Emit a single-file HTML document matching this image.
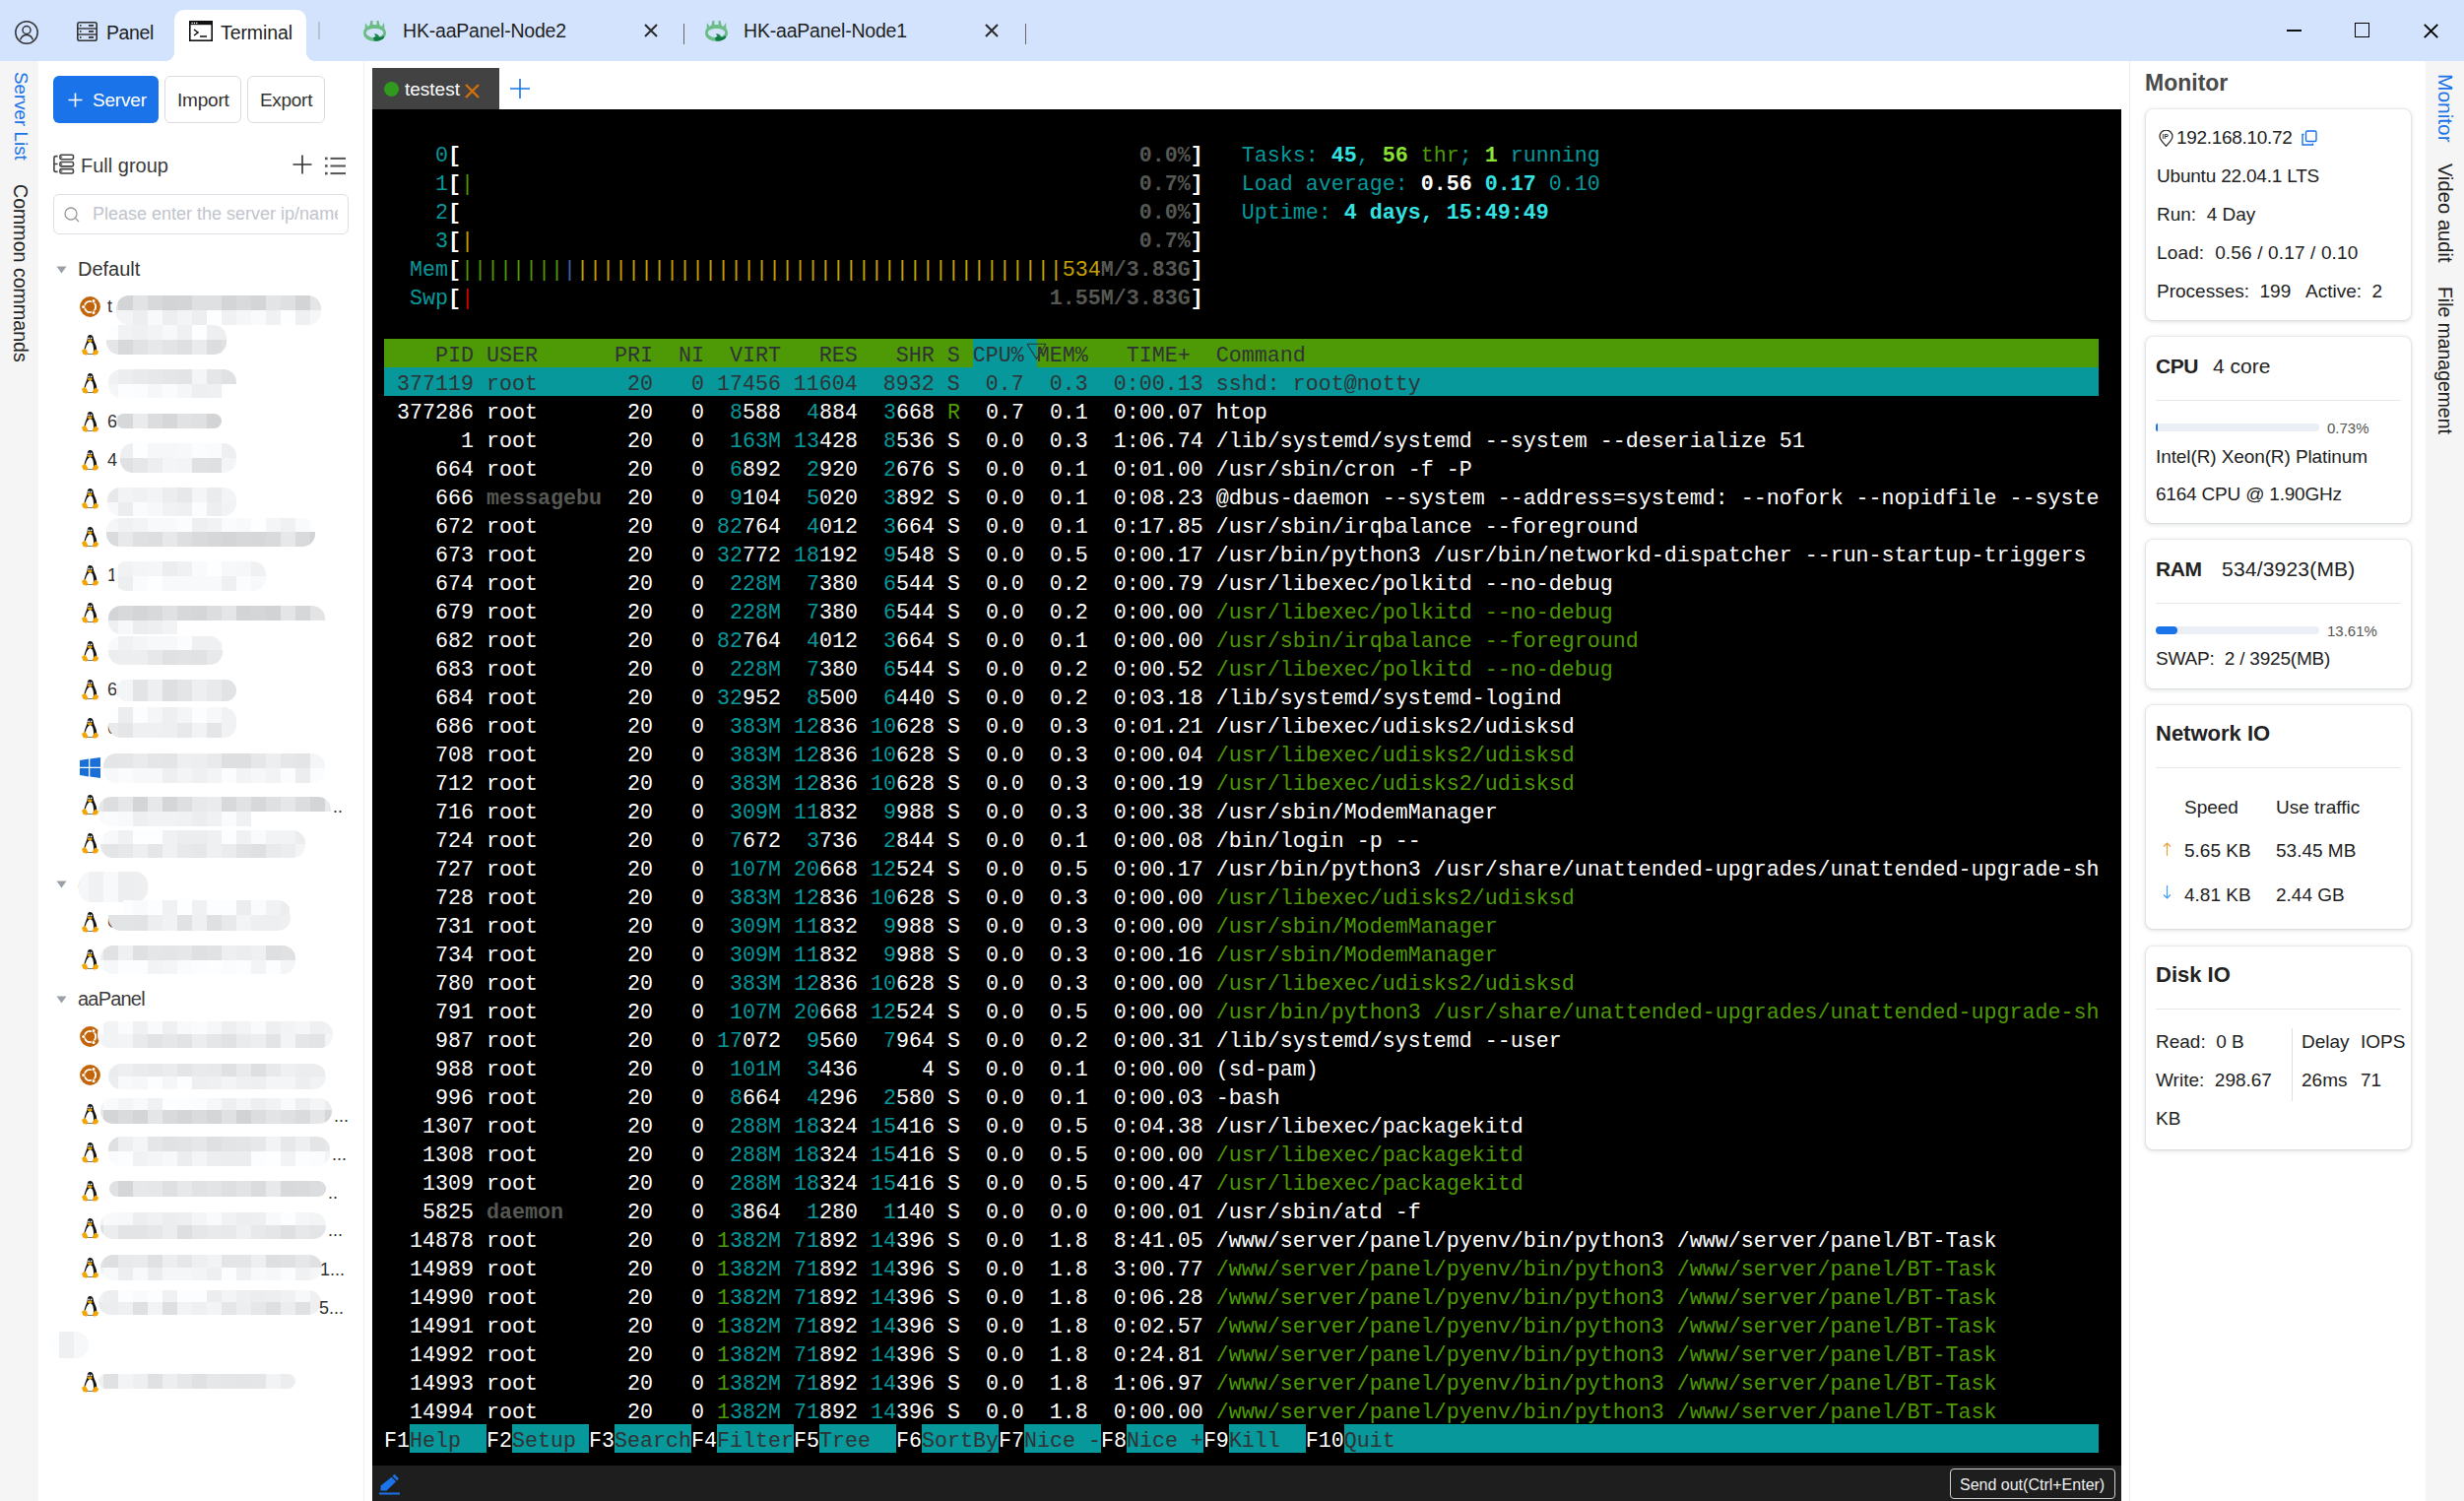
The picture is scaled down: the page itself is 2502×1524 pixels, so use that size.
<!DOCTYPE html>
<html><head><meta charset="utf-8">
<style>
*{box-sizing:border-box}
html,body{margin:0;padding:0;width:2502px;height:1524px;overflow:hidden;background:#fff;font-family:"Liberation Sans",sans-serif;color:#222}
.a{position:absolute}
.tl{position:absolute;left:390px;height:29px;line-height:29px;font-family:"Liberation Mono",monospace;font-size:21.67px;white-space:pre}
.vt{position:absolute;writing-mode:vertical-rl;font-size:20px;white-space:nowrap;line-height:20px}
.card{position:absolute;left:2179px;width:269px;background:#fff;border-radius:7px;box-shadow:0 1px 5px rgba(30,40,60,0.2),0 0 2px rgba(0,0,0,0.14)}
.mt{position:absolute;font-size:19px;white-space:nowrap;color:#222;line-height:22px}
</style></head><body>

<!-- top bar -->
<div class="a" style="left:0;top:0;width:2502px;height:62px;background:#d3e3fd"></div>
<!-- active tab -->
<div class="a" style="left:177px;top:10px;width:134px;height:52px;background:#fff;border-radius:10px 10px 0 0"></div>
<div class="a" style="left:167px;top:52px;width:10px;height:10px;background:radial-gradient(circle at 0 0,#d3e3fd 10px,#fff 10.5px)"></div>
<div class="a" style="left:311px;top:52px;width:10px;height:10px;background:radial-gradient(circle at 100% 0,#d3e3fd 10px,#fff 10.5px)"></div>

<!-- user icon -->
<svg class="a" style="left:15px;top:21px" width="24" height="24" viewBox="0 0 24 24"><circle cx="12" cy="12" r="11.2" fill="none" stroke="#333" stroke-width="1.5"/><circle cx="12" cy="9.5" r="4" fill="none" stroke="#333" stroke-width="1.5"/><path d="M5.5 19.5c1.2-3.2 3.6-5 6.5-5s5.3 1.8 6.5 5" fill="none" stroke="#333" stroke-width="1.5"/></svg>
<!-- panel icon -->
<svg class="a" style="left:78px;top:22px" width="21" height="20" viewBox="0 0 21 20"><rect x="0.8" y="0.8" width="19.4" height="18.4" rx="2" fill="none" stroke="#333" stroke-width="1.6"/><line x1="1" y1="7" x2="20" y2="7" stroke="#333" stroke-width="1.4"/><line x1="1" y1="13" x2="20" y2="13" stroke="#333" stroke-width="1.4"/><rect x="12" y="3" width="5" height="1.8" fill="#333"/><rect x="12" y="9" width="5" height="1.8" fill="#333"/><rect x="12" y="15" width="5" height="1.8" fill="#333"/><rect x="3" y="3" width="1.5" height="1.8" fill="#333"/><rect x="3" y="9" width="1.5" height="1.8" fill="#333"/><rect x="3" y="15" width="1.5" height="1.8" fill="#333"/></svg>
<div class="a" style="left:108px;top:21px;font-size:19.5px;line-height:24px;color:#1f1f1f;letter-spacing:-0.4px">Panel</div>
<!-- terminal icon -->
<svg class="a" style="left:192px;top:21px" width="24" height="21" viewBox="0 0 24 21"><rect x="0.8" y="0.8" width="22.4" height="19.4" fill="none" stroke="#111" stroke-width="1.6"/><rect x="0.8" y="0.8" width="22.4" height="3.4" fill="#111"/><rect x="2.5" y="1.8" width="1.3" height="1.3" fill="#fff"/><rect x="4.8" y="1.8" width="1.3" height="1.3" fill="#fff"/><rect x="7.1" y="1.8" width="1.3" height="1.3" fill="#fff"/><path d="M5 9l4 3-4 3" fill="none" stroke="#111" stroke-width="1.5"/><line x1="11" y1="16" x2="18" y2="16" stroke="#111" stroke-width="1.5"/></svg>
<div class="a" style="left:224px;top:21px;font-size:19.5px;line-height:24px;color:#1f1f1f;letter-spacing:-0.1px">Terminal</div>
<div class="a" style="left:323px;top:22px;width:2px;height:18px;background:#b9c3d2"></div>

<!-- node tabs -->
<svg class="a" style="left:368px;top:20px" width="25" height="23" viewBox="0 0 25 23"><path fill-rule="evenodd" d="M12.5 5C19 5 24 8.6 24 13.5S19 22 12.5 22S1 18.4 1 13.5S6 5 12.5 5ZM12.5 9C7.5 9 3.8 10.8 3.8 13.2S7.5 18 12.5 18S21.2 15.6 21.2 13.2S17.5 9 12.5 9Z" fill="#6cbd85"/><path d="M2.5 9L3 3L5.5 7ZM7 7L8.5 1H10.5L10.5 6.5ZM14.5 6.5L14.5 1H16.5L18 7ZM19.5 7L22 3L22.5 9Z" fill="#6cbd85"/><path d="M11 18.5C13 16.5 15 16 17.5 17.5C19.5 18 20.5 17 21.5 16L22 18.5C20 21 16 22 12 21.5Z" fill="#0e7a45"/><path d="M12 14.5C14 14 16 15 17 17L14 18Z" fill="#1b8a4c"/></svg>
<div class="a" style="left:409px;top:19px;font-size:19.5px;line-height:24px;color:#1f1f1f;letter-spacing:-0.2px">HK-aaPanel-Node2</div>
<svg class="a" style="left:654px;top:24px" width="14" height="14" viewBox="0 0 14 14"><path d="M1 1L13 13M13 1L1 13" stroke="#2a2a2a" stroke-width="2"/></svg>
<div class="a" style="left:694px;top:24px;width:1px;height:21px;background:#666"></div>
<svg class="a" style="left:715px;top:20px" width="25" height="23" viewBox="0 0 25 23"><path fill-rule="evenodd" d="M12.5 5C19 5 24 8.6 24 13.5S19 22 12.5 22S1 18.4 1 13.5S6 5 12.5 5ZM12.5 9C7.5 9 3.8 10.8 3.8 13.2S7.5 18 12.5 18S21.2 15.6 21.2 13.2S17.5 9 12.5 9Z" fill="#6cbd85"/><path d="M2.5 9L3 3L5.5 7ZM7 7L8.5 1H10.5L10.5 6.5ZM14.5 6.5L14.5 1H16.5L18 7ZM19.5 7L22 3L22.5 9Z" fill="#6cbd85"/><path d="M11 18.5C13 16.5 15 16 17.5 17.5C19.5 18 20.5 17 21.5 16L22 18.5C20 21 16 22 12 21.5Z" fill="#0e7a45"/><path d="M12 14.5C14 14 16 15 17 17L14 18Z" fill="#1b8a4c"/></svg>
<div class="a" style="left:755px;top:19px;font-size:19.5px;line-height:24px;color:#1f1f1f;letter-spacing:-0.2px">HK-aaPanel-Node1</div>
<svg class="a" style="left:1000px;top:24px" width="14" height="14" viewBox="0 0 14 14"><path d="M1 1L13 13M13 1L1 13" stroke="#2a2a2a" stroke-width="2"/></svg>
<div class="a" style="left:1041px;top:24px;width:1px;height:21px;background:#666"></div>

<!-- window controls -->
<div class="a" style="left:2322px;top:30px;width:15px;height:2px;background:#111"></div>
<div class="a" style="left:2391px;top:23px;width:15px;height:15px;border:1.6px solid #000"></div>
<svg class="a" style="left:2461px;top:24px" width="15" height="15" viewBox="0 0 15 15"><path d="M0.8 0.8L14.2 14.2M14.2 0.8L0.8 14.2" stroke="#000" stroke-width="1.9"/></svg>

<!-- left sidebar -->
<div class="a" style="left:0;top:62px;width:39px;height:1462px;background:#f5f5f5"></div>
<div class="vt" style="left:11px;top:73px;color:#1a73e8;font-size:18.8px">Server List</div>
<div class="vt" style="left:11px;top:187px;color:#222;font-size:19.6px">Common commands</div>

<!-- server panel -->
<div class="a" style="left:369px;top:62px;width:1px;height:1462px;background:#eeeeee"></div>
<div class="a" style="left:54px;top:77px;width:107px;height:48px;background:#1a73e8;border-radius:6px"></div>
<svg class="a" style="left:69px;top:94px" width="15" height="15" viewBox="0 0 15 15"><path d="M7.5 0.5V14.5M0.5 7.5H14.5" stroke="#fff" stroke-width="1.6"/></svg>
<div class="a" style="left:94px;top:90px;font-size:19px;line-height:24px;color:#fff;letter-spacing:-0.2px">Server</div>
<div class="a" style="left:167px;top:77px;width:78px;height:48px;border:1px solid #dcdcdc;border-radius:6px"></div>
<div class="a" style="left:180px;top:90px;font-size:19px;line-height:24px;color:#333;letter-spacing:-0.2px">Import</div>
<div class="a" style="left:251px;top:77px;width:79px;height:48px;border:1px solid #dcdcdc;border-radius:6px"></div>
<div class="a" style="left:264px;top:90px;font-size:19px;line-height:24px;color:#333;letter-spacing:-0.3px">Export</div>

<svg class="a" style="left:54px;top:156px" width="22" height="21" viewBox="0 0 22 21"><path d="M4.6 2.6H2.6Q0.9 2.6 0.9 4.3V16.6Q0.9 18.4 2.6 18.4H4.6M0.9 10.5H4.6" fill="none" stroke="#444" stroke-width="1.6"/><rect x="6.9" y="1.3" width="13.6" height="4.4" rx="1.4" fill="none" stroke="#444" stroke-width="1.6"/><rect x="6.9" y="8.5" width="13.6" height="4.4" rx="1.4" fill="none" stroke="#444" stroke-width="1.6"/><rect x="6.9" y="15.6" width="13.6" height="4.4" rx="1.4" fill="none" stroke="#444" stroke-width="1.6"/><rect x="8.2" y="2.6" width="1" height="1.8" fill="#444"/><rect x="8.2" y="9.8" width="1" height="1.8" fill="#444"/><rect x="8.2" y="16.9" width="1" height="1.8" fill="#444"/></svg>
<div class="a" style="left:82px;top:156px;font-size:20px;line-height:24px;color:#3a3a3a">Full group</div>
<svg class="a" style="left:297px;top:157px" width="20" height="20" viewBox="0 0 20 20"><path d="M10 0.5V19.5M0.5 10H19.5" stroke="#333" stroke-width="1.6"/></svg>
<svg class="a" style="left:330px;top:159px" width="21" height="19" viewBox="0 0 21 19"><rect x="0" y="0.6" width="2.6" height="2.6" fill="#555"/><rect x="0" y="8.2" width="2.6" height="2.6" fill="#555"/><rect x="0" y="15.8" width="2.6" height="2.6" fill="#555"/><rect x="5.5" y="0.9" width="15.5" height="2" fill="#555"/><rect x="5.5" y="8.5" width="15.5" height="2" fill="#555"/><rect x="5.5" y="16.1" width="15.5" height="2" fill="#555"/></svg>

<div class="a" style="left:54px;top:197px;width:300px;height:41px;border:1px solid #dcdfe6;border-radius:6px"></div>
<svg class="a" style="left:65px;top:210px" width="16" height="16" viewBox="0 0 16 16"><circle cx="7" cy="7" r="6" fill="none" stroke="#999" stroke-width="1.3"/><path d="M11.5 11.5L15 15" stroke="#999" stroke-width="1.3"/></svg>
<div class="a" style="left:94px;top:206px;font-size:18px;line-height:22px;color:#c0c4cc;white-space:nowrap;overflow:hidden;width:249px">Please enter the server ip/name</div>

<svg class="a" style="left:57px;top:270px" width="11" height="8" viewBox="0 0 11 8"><path d="M0.5 0.5H10.5L5.5 7.5Z" fill="#9aa0a8"/></svg>
<div class="a" style="left:79px;top:261px;font-size:20px;line-height:24px;color:#333">Default</div>
<svg class="a" style="left:57px;top:894px" width="11" height="8" viewBox="0 0 11 8"><path d="M0.5 0.5H10.5L5.5 7.5Z" fill="#9aa0a8"/></svg>
<div class="a" style="left:79px;top:889px;font-size:20px;line-height:22px;color:#444;white-space:nowrap">C</div>
<div class="a" style="left:80px;top:885px;width:70px;height:31px;border-radius:13px;overflow:hidden"><div class="a" style="left:0px;top:0px;width:10px;height:31px;background:#f6f7f9"></div><div class="a" style="left:10px;top:0px;width:15px;height:31px;background:#f0f1f3"></div><div class="a" style="left:25px;top:0px;width:15px;height:31px;background:#f8f9fb"></div><div class="a" style="left:40px;top:0px;width:15px;height:31px;background:#edeef0"></div><div class="a" style="left:55px;top:0px;width:15px;height:31px;background:#eeeff1"></div></div>
<svg class="a" style="left:57px;top:1011px" width="11" height="8" viewBox="0 0 11 8"><path d="M0.5 0.5H10.5L5.5 7.5Z" fill="#9aa0a8"/></svg>
<div class="a" style="left:79px;top:1002px;font-size:20px;line-height:24px;color:#3c3c3c;letter-spacing:-0.8px">aaPanel</div>
<div class="a" style="left:51px;top:1352px;width:39px;height:27px;border-radius:13px;overflow:hidden"><div class="a" style="left:0px;top:0px;width:9px;height:27px;background:#fdfeff"></div><div class="a" style="left:9px;top:0px;width:15px;height:27px;background:#eff0f2"></div><div class="a" style="left:24px;top:0px;width:15px;height:27px;background:#f7f8fa"></div></div>
<svg class="a" style="left:81px;top:301px" width="21" height="21" viewBox="0 0 21 21"><circle cx="10.5" cy="10.5" r="10.4" fill="#c2650a"/><circle cx="10.5" cy="10.5" r="5.7" fill="none" stroke="#fff" stroke-width="1.8"/><circle cx="10.5" cy="10.5" r="3.4" fill="#c2650a"/><circle cx="3.6" cy="10.5" r="2.3" fill="#c2650a"/><circle cx="14" cy="4.4" r="2.3" fill="#c2650a"/><circle cx="14" cy="16.6" r="2.3" fill="#c2650a"/><circle cx="3.6" cy="10.5" r="1.5" fill="#fff"/><circle cx="14" cy="4.4" r="1.5" fill="#fff"/><circle cx="14" cy="16.6" r="1.5" fill="#fff"/></svg>
<div class="a" style="left:109px;top:300px;font-size:18px;line-height:22px;color:#333;white-space:nowrap">t</div>
<div class="a" style="left:118px;top:300px;width:208px;height:30px;border-radius:13px;overflow:hidden"><div class="a" style="left:0px;top:0px;width:2px;height:15px;background:#e4e5e7"></div><div class="a" style="left:2px;top:0px;width:15px;height:15px;background:#d3d4d6"></div><div class="a" style="left:17px;top:0px;width:15px;height:15px;background:#e2e3e5"></div><div class="a" style="left:32px;top:0px;width:15px;height:15px;background:#d8d9db"></div><div class="a" style="left:47px;top:0px;width:15px;height:15px;background:#d3d4d6"></div><div class="a" style="left:62px;top:0px;width:15px;height:15px;background:#d4d5d7"></div><div class="a" style="left:77px;top:0px;width:15px;height:15px;background:#dfe0e2"></div><div class="a" style="left:92px;top:0px;width:15px;height:15px;background:#dfe0e2"></div><div class="a" style="left:107px;top:0px;width:15px;height:15px;background:#d4d5d7"></div><div class="a" style="left:122px;top:0px;width:15px;height:15px;background:#d9dadc"></div><div class="a" style="left:137px;top:0px;width:15px;height:15px;background:#d4d5d7"></div><div class="a" style="left:152px;top:0px;width:15px;height:15px;background:#e3e4e6"></div><div class="a" style="left:167px;top:0px;width:15px;height:15px;background:#dfe0e2"></div><div class="a" style="left:182px;top:0px;width:15px;height:15px;background:#d3d4d6"></div><div class="a" style="left:197px;top:0px;width:11px;height:15px;background:#e4e5e7"></div><div class="a" style="left:0px;top:15px;width:2px;height:15px;background:#eff0f2"></div><div class="a" style="left:2px;top:15px;width:15px;height:15px;background:#f3f4f6"></div><div class="a" style="left:17px;top:15px;width:15px;height:15px;background:#edeef0"></div><div class="a" style="left:32px;top:15px;width:15px;height:15px;background:#f8f9fb"></div><div class="a" style="left:47px;top:15px;width:15px;height:15px;background:#edeef0"></div><div class="a" style="left:62px;top:15px;width:15px;height:15px;background:#f3f4f6"></div><div class="a" style="left:77px;top:15px;width:15px;height:15px;background:#edeef0"></div><div class="a" style="left:92px;top:15px;width:15px;height:15px;background:#fdfeff"></div><div class="a" style="left:107px;top:15px;width:15px;height:15px;background:#f0f1f3"></div><div class="a" style="left:122px;top:15px;width:15px;height:15px;background:#f5f6f8"></div><div class="a" style="left:137px;top:15px;width:15px;height:15px;background:#f9fafc"></div><div class="a" style="left:152px;top:15px;width:15px;height:15px;background:#f0f1f3"></div><div class="a" style="left:167px;top:15px;width:15px;height:15px;background:#fdfeff"></div><div class="a" style="left:182px;top:15px;width:15px;height:15px;background:#eff0f2"></div><div class="a" style="left:197px;top:15px;width:11px;height:15px;background:#f5f6f8"></div></div>
<svg class="a" style="left:83px;top:340px" width="18" height="21" viewBox="0 0 18 21"><path d="M8.3 0C6.6 0 5.8 1.5 5.8 3.3C5.8 5.5 4.6 7.8 3.6 10.5C2.8 12.8 2.2 15 2.4 17.5L2.6 19.8H14.6C15.2 17 15.5 14.5 14.8 12C14 9 11.8 5.8 11.8 3.6C11.8 1.5 10.4 0 8.3 0Z" fill="#151515"/><path d="M7.8 7.4C5.8 8.4 3.8 12 3.6 16.5L3.8 19.2H11.6C12.4 15 12 10.2 10.2 8C9.5 7.2 8.6 7.1 7.8 7.4Z" fill="#fff"/><circle cx="7.2" cy="3.4" r="0.9" fill="#fff"/><circle cx="9.6" cy="3.4" r="0.9" fill="#fff"/><ellipse cx="8.3" cy="6" rx="2.4" ry="1.4" fill="#f4a500"/><path d="M0 15.8L3.8 13.8L6.4 18.8L4.6 20.7L1.2 19.6Z" fill="#f4a500"/><path d="M17.2 16.8L13.4 14.6L10.8 19L12.6 20.8L16 19.8Z" fill="#f4a500"/></svg>
<div class="a" style="left:108px;top:330px;width:122px;height:30px;border-radius:13px;overflow:hidden"><div class="a" style="left:0px;top:0px;width:12px;height:15px;background:#fdfeff"></div><div class="a" style="left:12px;top:0px;width:15px;height:15px;background:#f1f2f4"></div><div class="a" style="left:27px;top:0px;width:15px;height:15px;background:#eff0f2"></div><div class="a" style="left:42px;top:0px;width:15px;height:15px;background:#f2f3f5"></div><div class="a" style="left:57px;top:0px;width:15px;height:15px;background:#f7f8fa"></div><div class="a" style="left:72px;top:0px;width:15px;height:15px;background:#eff0f2"></div><div class="a" style="left:87px;top:0px;width:15px;height:15px;background:#fdfeff"></div><div class="a" style="left:102px;top:0px;width:15px;height:15px;background:#eeeff1"></div><div class="a" style="left:117px;top:0px;width:5px;height:15px;background:#edeef0"></div><div class="a" style="left:0px;top:15px;width:12px;height:15px;background:#e5e6e8"></div><div class="a" style="left:12px;top:15px;width:15px;height:15px;background:#d8d9db"></div><div class="a" style="left:27px;top:15px;width:15px;height:15px;background:#e1e2e4"></div><div class="a" style="left:42px;top:15px;width:15px;height:15px;background:#e7e8ea"></div><div class="a" style="left:57px;top:15px;width:15px;height:15px;background:#e3e4e6"></div><div class="a" style="left:72px;top:15px;width:15px;height:15px;background:#dfe0e2"></div><div class="a" style="left:87px;top:15px;width:15px;height:15px;background:#eaebed"></div><div class="a" style="left:102px;top:15px;width:15px;height:15px;background:#dcdddf"></div><div class="a" style="left:117px;top:15px;width:5px;height:15px;background:#e0e1e3"></div></div>
<svg class="a" style="left:83px;top:379px" width="18" height="21" viewBox="0 0 18 21"><path d="M8.3 0C6.6 0 5.8 1.5 5.8 3.3C5.8 5.5 4.6 7.8 3.6 10.5C2.8 12.8 2.2 15 2.4 17.5L2.6 19.8H14.6C15.2 17 15.5 14.5 14.8 12C14 9 11.8 5.8 11.8 3.6C11.8 1.5 10.4 0 8.3 0Z" fill="#151515"/><path d="M7.8 7.4C5.8 8.4 3.8 12 3.6 16.5L3.8 19.2H11.6C12.4 15 12 10.2 10.2 8C9.5 7.2 8.6 7.1 7.8 7.4Z" fill="#fff"/><circle cx="7.2" cy="3.4" r="0.9" fill="#fff"/><circle cx="9.6" cy="3.4" r="0.9" fill="#fff"/><ellipse cx="8.3" cy="6" rx="2.4" ry="1.4" fill="#f4a500"/><path d="M0 15.8L3.8 13.8L6.4 18.8L4.6 20.7L1.2 19.6Z" fill="#f4a500"/><path d="M17.2 16.8L13.4 14.6L10.8 19L12.6 20.8L16 19.8Z" fill="#f4a500"/></svg>
<div class="a" style="left:110px;top:375px;width:130px;height:29px;border-radius:13px;overflow:hidden"><div class="a" style="left:0px;top:0px;width:10px;height:15px;background:#f0f1f3"></div><div class="a" style="left:10px;top:0px;width:15px;height:15px;background:#ecedef"></div><div class="a" style="left:25px;top:0px;width:15px;height:15px;background:#e9eaec"></div><div class="a" style="left:40px;top:0px;width:15px;height:15px;background:#e7e8ea"></div><div class="a" style="left:55px;top:0px;width:15px;height:15px;background:#e5e6e8"></div><div class="a" style="left:70px;top:0px;width:15px;height:15px;background:#e3e4e6"></div><div class="a" style="left:85px;top:0px;width:15px;height:15px;background:#f4f5f7"></div><div class="a" style="left:100px;top:0px;width:15px;height:15px;background:#e5e6e8"></div><div class="a" style="left:115px;top:0px;width:15px;height:15px;background:#e0e1e3"></div><div class="a" style="left:0px;top:15px;width:10px;height:14px;background:#f5f6f8"></div><div class="a" style="left:10px;top:15px;width:15px;height:14px;background:#fcfdff"></div><div class="a" style="left:25px;top:15px;width:15px;height:14px;background:#fbfcfe"></div><div class="a" style="left:40px;top:15px;width:15px;height:14px;background:#f6f7f9"></div><div class="a" style="left:55px;top:15px;width:15px;height:14px;background:#fafbfd"></div><div class="a" style="left:70px;top:15px;width:15px;height:14px;background:#f5f6f8"></div><div class="a" style="left:85px;top:15px;width:15px;height:14px;background:#eeeff1"></div><div class="a" style="left:100px;top:15px;width:15px;height:14px;background:#eff0f2"></div><div class="a" style="left:115px;top:15px;width:3px;height:14px;background:#fcfdff"></div></div>
<svg class="a" style="left:83px;top:418px" width="18" height="21" viewBox="0 0 18 21"><path d="M8.3 0C6.6 0 5.8 1.5 5.8 3.3C5.8 5.5 4.6 7.8 3.6 10.5C2.8 12.8 2.2 15 2.4 17.5L2.6 19.8H14.6C15.2 17 15.5 14.5 14.8 12C14 9 11.8 5.8 11.8 3.6C11.8 1.5 10.4 0 8.3 0Z" fill="#151515"/><path d="M7.8 7.4C5.8 8.4 3.8 12 3.6 16.5L3.8 19.2H11.6C12.4 15 12 10.2 10.2 8C9.5 7.2 8.6 7.1 7.8 7.4Z" fill="#fff"/><circle cx="7.2" cy="3.4" r="0.9" fill="#fff"/><circle cx="9.6" cy="3.4" r="0.9" fill="#fff"/><ellipse cx="8.3" cy="6" rx="2.4" ry="1.4" fill="#f4a500"/><path d="M0 15.8L3.8 13.8L6.4 18.8L4.6 20.7L1.2 19.6Z" fill="#f4a500"/><path d="M17.2 16.8L13.4 14.6L10.8 19L12.6 20.8L16 19.8Z" fill="#f4a500"/></svg>
<div class="a" style="left:109px;top:417px;font-size:18px;line-height:22px;color:#333;white-space:nowrap">6</div>
<div class="a" style="left:118px;top:420px;width:107px;height:15px;border-radius:13px;overflow:hidden"><div class="a" style="left:0px;top:0px;width:2px;height:15px;background:#dfe0e2"></div><div class="a" style="left:2px;top:0px;width:15px;height:15px;background:#d7d8da"></div><div class="a" style="left:17px;top:0px;width:15px;height:15px;background:#eaebed"></div><div class="a" style="left:32px;top:0px;width:15px;height:15px;background:#dcdddf"></div><div class="a" style="left:47px;top:0px;width:15px;height:15px;background:#d6d7d9"></div><div class="a" style="left:62px;top:0px;width:15px;height:15px;background:#e1e2e4"></div><div class="a" style="left:77px;top:0px;width:15px;height:15px;background:#dfe0e2"></div><div class="a" style="left:92px;top:0px;width:15px;height:15px;background:#d3d4d6"></div></div>
<svg class="a" style="left:83px;top:457px" width="18" height="21" viewBox="0 0 18 21"><path d="M8.3 0C6.6 0 5.8 1.5 5.8 3.3C5.8 5.5 4.6 7.8 3.6 10.5C2.8 12.8 2.2 15 2.4 17.5L2.6 19.8H14.6C15.2 17 15.5 14.5 14.8 12C14 9 11.8 5.8 11.8 3.6C11.8 1.5 10.4 0 8.3 0Z" fill="#151515"/><path d="M7.8 7.4C5.8 8.4 3.8 12 3.6 16.5L3.8 19.2H11.6C12.4 15 12 10.2 10.2 8C9.5 7.2 8.6 7.1 7.8 7.4Z" fill="#fff"/><circle cx="7.2" cy="3.4" r="0.9" fill="#fff"/><circle cx="9.6" cy="3.4" r="0.9" fill="#fff"/><ellipse cx="8.3" cy="6" rx="2.4" ry="1.4" fill="#f4a500"/><path d="M0 15.8L3.8 13.8L6.4 18.8L4.6 20.7L1.2 19.6Z" fill="#f4a500"/><path d="M17.2 16.8L13.4 14.6L10.8 19L12.6 20.8L16 19.8Z" fill="#f4a500"/></svg>
<div class="a" style="left:109px;top:456px;font-size:18px;line-height:22px;color:#333;white-space:nowrap">4</div>
<div class="a" style="left:122px;top:450px;width:118px;height:30px;border-radius:13px;overflow:hidden"><div class="a" style="left:0px;top:0px;width:13px;height:15px;background:#eeeff1"></div><div class="a" style="left:13px;top:0px;width:15px;height:15px;background:#fdfeff"></div><div class="a" style="left:28px;top:0px;width:15px;height:15px;background:#f6f7f9"></div><div class="a" style="left:43px;top:0px;width:15px;height:15px;background:#f6f7f9"></div><div class="a" style="left:58px;top:0px;width:15px;height:15px;background:#f7f8fa"></div><div class="a" style="left:73px;top:0px;width:15px;height:15px;background:#fbfcfe"></div><div class="a" style="left:88px;top:0px;width:15px;height:15px;background:#fafbfd"></div><div class="a" style="left:103px;top:0px;width:15px;height:15px;background:#eeeff1"></div><div class="a" style="left:0px;top:15px;width:13px;height:15px;background:#e0e1e3"></div><div class="a" style="left:13px;top:15px;width:15px;height:15px;background:#e6e7e9"></div><div class="a" style="left:28px;top:15px;width:15px;height:15px;background:#edeef0"></div><div class="a" style="left:43px;top:15px;width:15px;height:15px;background:#f4f5f7"></div><div class="a" style="left:58px;top:15px;width:15px;height:15px;background:#f3f4f6"></div><div class="a" style="left:73px;top:15px;width:15px;height:15px;background:#e0e1e3"></div><div class="a" style="left:88px;top:15px;width:15px;height:15px;background:#dfe0e2"></div><div class="a" style="left:103px;top:15px;width:15px;height:15px;background:#f4f5f7"></div></div>
<svg class="a" style="left:83px;top:496px" width="18" height="21" viewBox="0 0 18 21"><path d="M8.3 0C6.6 0 5.8 1.5 5.8 3.3C5.8 5.5 4.6 7.8 3.6 10.5C2.8 12.8 2.2 15 2.4 17.5L2.6 19.8H14.6C15.2 17 15.5 14.5 14.8 12C14 9 11.8 5.8 11.8 3.6C11.8 1.5 10.4 0 8.3 0Z" fill="#151515"/><path d="M7.8 7.4C5.8 8.4 3.8 12 3.6 16.5L3.8 19.2H11.6C12.4 15 12 10.2 10.2 8C9.5 7.2 8.6 7.1 7.8 7.4Z" fill="#fff"/><circle cx="7.2" cy="3.4" r="0.9" fill="#fff"/><circle cx="9.6" cy="3.4" r="0.9" fill="#fff"/><ellipse cx="8.3" cy="6" rx="2.4" ry="1.4" fill="#f4a500"/><path d="M0 15.8L3.8 13.8L6.4 18.8L4.6 20.7L1.2 19.6Z" fill="#f4a500"/><path d="M17.2 16.8L13.4 14.6L10.8 19L12.6 20.8L16 19.8Z" fill="#f4a500"/></svg>
<div class="a" style="left:109px;top:495px;width:131px;height:29px;border-radius:13px;overflow:hidden"><div class="a" style="left:0px;top:0px;width:11px;height:15px;background:#e7e8ea"></div><div class="a" style="left:11px;top:0px;width:15px;height:15px;background:#f2f3f5"></div><div class="a" style="left:26px;top:0px;width:15px;height:15px;background:#f0f1f3"></div><div class="a" style="left:41px;top:0px;width:15px;height:15px;background:#f3f4f6"></div><div class="a" style="left:56px;top:0px;width:15px;height:15px;background:#ecedef"></div><div class="a" style="left:71px;top:0px;width:15px;height:15px;background:#e7e8ea"></div><div class="a" style="left:86px;top:0px;width:15px;height:15px;background:#f4f5f7"></div><div class="a" style="left:101px;top:0px;width:15px;height:15px;background:#eaebed"></div><div class="a" style="left:116px;top:0px;width:15px;height:15px;background:#f3f4f6"></div><div class="a" style="left:0px;top:15px;width:11px;height:14px;background:#f7f8fa"></div><div class="a" style="left:11px;top:15px;width:15px;height:14px;background:#ecedef"></div><div class="a" style="left:26px;top:15px;width:15px;height:14px;background:#fafbfd"></div><div class="a" style="left:41px;top:15px;width:15px;height:14px;background:#f7f8fa"></div><div class="a" style="left:56px;top:15px;width:15px;height:14px;background:#f1f2f4"></div><div class="a" style="left:71px;top:15px;width:15px;height:14px;background:#eff0f2"></div><div class="a" style="left:86px;top:15px;width:15px;height:14px;background:#fbfcfe"></div><div class="a" style="left:101px;top:15px;width:15px;height:14px;background:#edeef0"></div><div class="a" style="left:116px;top:15px;width:15px;height:14px;background:#f2f3f5"></div></div>
<svg class="a" style="left:83px;top:535px" width="18" height="21" viewBox="0 0 18 21"><path d="M8.3 0C6.6 0 5.8 1.5 5.8 3.3C5.8 5.5 4.6 7.8 3.6 10.5C2.8 12.8 2.2 15 2.4 17.5L2.6 19.8H14.6C15.2 17 15.5 14.5 14.8 12C14 9 11.8 5.8 11.8 3.6C11.8 1.5 10.4 0 8.3 0Z" fill="#151515"/><path d="M7.8 7.4C5.8 8.4 3.8 12 3.6 16.5L3.8 19.2H11.6C12.4 15 12 10.2 10.2 8C9.5 7.2 8.6 7.1 7.8 7.4Z" fill="#fff"/><circle cx="7.2" cy="3.4" r="0.9" fill="#fff"/><circle cx="9.6" cy="3.4" r="0.9" fill="#fff"/><ellipse cx="8.3" cy="6" rx="2.4" ry="1.4" fill="#f4a500"/><path d="M0 15.8L3.8 13.8L6.4 18.8L4.6 20.7L1.2 19.6Z" fill="#f4a500"/><path d="M17.2 16.8L13.4 14.6L10.8 19L12.6 20.8L16 19.8Z" fill="#f4a500"/></svg>
<div class="a" style="left:108px;top:526px;width:212px;height:29px;border-radius:13px;overflow:hidden"><div class="a" style="left:0px;top:0px;width:12px;height:14px;background:#f5f6f8"></div><div class="a" style="left:12px;top:0px;width:15px;height:14px;background:#f0f1f3"></div><div class="a" style="left:27px;top:0px;width:15px;height:14px;background:#f3f4f6"></div><div class="a" style="left:42px;top:0px;width:15px;height:14px;background:#f8f9fb"></div><div class="a" style="left:57px;top:0px;width:15px;height:14px;background:#f8f9fb"></div><div class="a" style="left:72px;top:0px;width:15px;height:14px;background:#fbfcfe"></div><div class="a" style="left:87px;top:0px;width:15px;height:14px;background:#eeeff1"></div><div class="a" style="left:102px;top:0px;width:15px;height:14px;background:#f1f2f4"></div><div class="a" style="left:117px;top:0px;width:15px;height:14px;background:#fafbfd"></div><div class="a" style="left:132px;top:0px;width:15px;height:14px;background:#f8f9fb"></div><div class="a" style="left:147px;top:0px;width:15px;height:14px;background:#fdfeff"></div><div class="a" style="left:162px;top:0px;width:15px;height:14px;background:#f4f5f7"></div><div class="a" style="left:177px;top:0px;width:15px;height:14px;background:#f0f1f3"></div><div class="a" style="left:192px;top:0px;width:15px;height:14px;background:#f9fafc"></div><div class="a" style="left:207px;top:0px;width:5px;height:14px;background:#fdfeff"></div><div class="a" style="left:0px;top:14px;width:12px;height:15px;background:#dadbdd"></div><div class="a" style="left:12px;top:14px;width:15px;height:15px;background:#e8e9eb"></div><div class="a" style="left:27px;top:14px;width:15px;height:15px;background:#dfe0e2"></div><div class="a" style="left:42px;top:14px;width:15px;height:15px;background:#dddee0"></div><div class="a" style="left:57px;top:14px;width:15px;height:15px;background:#e7e8ea"></div><div class="a" style="left:72px;top:14px;width:15px;height:15px;background:#dedfe1"></div><div class="a" style="left:87px;top:14px;width:15px;height:15px;background:#d9dadc"></div><div class="a" style="left:102px;top:14px;width:15px;height:15px;background:#d6d7d9"></div><div class="a" style="left:117px;top:14px;width:15px;height:15px;background:#d4d5d7"></div><div class="a" style="left:132px;top:14px;width:15px;height:15px;background:#d7d8da"></div><div class="a" style="left:147px;top:14px;width:15px;height:15px;background:#d6d7d9"></div><div class="a" style="left:162px;top:14px;width:15px;height:15px;background:#d9dadc"></div><div class="a" style="left:177px;top:14px;width:15px;height:15px;background:#e7e8ea"></div><div class="a" style="left:192px;top:14px;width:15px;height:15px;background:#d9dadc"></div><div class="a" style="left:207px;top:14px;width:5px;height:15px;background:#d2d3d5"></div></div>
<svg class="a" style="left:83px;top:574px" width="18" height="21" viewBox="0 0 18 21"><path d="M8.3 0C6.6 0 5.8 1.5 5.8 3.3C5.8 5.5 4.6 7.8 3.6 10.5C2.8 12.8 2.2 15 2.4 17.5L2.6 19.8H14.6C15.2 17 15.5 14.5 14.8 12C14 9 11.8 5.8 11.8 3.6C11.8 1.5 10.4 0 8.3 0Z" fill="#151515"/><path d="M7.8 7.4C5.8 8.4 3.8 12 3.6 16.5L3.8 19.2H11.6C12.4 15 12 10.2 10.2 8C9.5 7.2 8.6 7.1 7.8 7.4Z" fill="#fff"/><circle cx="7.2" cy="3.4" r="0.9" fill="#fff"/><circle cx="9.6" cy="3.4" r="0.9" fill="#fff"/><ellipse cx="8.3" cy="6" rx="2.4" ry="1.4" fill="#f4a500"/><path d="M0 15.8L3.8 13.8L6.4 18.8L4.6 20.7L1.2 19.6Z" fill="#f4a500"/><path d="M17.2 16.8L13.4 14.6L10.8 19L12.6 20.8L16 19.8Z" fill="#f4a500"/></svg>
<div class="a" style="left:109px;top:573px;font-size:18px;line-height:22px;color:#333;white-space:nowrap">1</div>
<div class="a" style="left:116px;top:570px;width:154px;height:30px;border-radius:13px;overflow:hidden"><div class="a" style="left:0px;top:0px;width:4px;height:15px;background:#fbfcfe"></div><div class="a" style="left:4px;top:0px;width:15px;height:15px;background:#f1f2f4"></div><div class="a" style="left:19px;top:0px;width:15px;height:15px;background:#f4f5f7"></div><div class="a" style="left:34px;top:0px;width:15px;height:15px;background:#f5f6f8"></div><div class="a" style="left:49px;top:0px;width:15px;height:15px;background:#ecedef"></div><div class="a" style="left:64px;top:0px;width:15px;height:15px;background:#f0f1f3"></div><div class="a" style="left:79px;top:0px;width:15px;height:15px;background:#f9fafc"></div><div class="a" style="left:94px;top:0px;width:15px;height:15px;background:#fdfeff"></div><div class="a" style="left:109px;top:0px;width:15px;height:15px;background:#f7f8fa"></div><div class="a" style="left:124px;top:0px;width:15px;height:15px;background:#f6f7f9"></div><div class="a" style="left:139px;top:0px;width:15px;height:15px;background:#f0f1f3"></div><div class="a" style="left:0px;top:15px;width:4px;height:15px;background:#fcfdff"></div><div class="a" style="left:4px;top:15px;width:15px;height:15px;background:#edeef0"></div><div class="a" style="left:19px;top:15px;width:15px;height:15px;background:#fafbfd"></div><div class="a" style="left:34px;top:15px;width:15px;height:15px;background:#fdfeff"></div><div class="a" style="left:49px;top:15px;width:15px;height:15px;background:#f8f9fb"></div><div class="a" style="left:64px;top:15px;width:15px;height:15px;background:#f8f9fb"></div><div class="a" style="left:79px;top:15px;width:15px;height:15px;background:#f8f9fb"></div><div class="a" style="left:94px;top:15px;width:15px;height:15px;background:#f8f9fb"></div><div class="a" style="left:109px;top:15px;width:15px;height:15px;background:#eff0f2"></div><div class="a" style="left:124px;top:15px;width:15px;height:15px;background:#fbfcfe"></div><div class="a" style="left:139px;top:15px;width:15px;height:15px;background:#f8f9fb"></div></div>
<svg class="a" style="left:83px;top:612px" width="18" height="21" viewBox="0 0 18 21"><path d="M8.3 0C6.6 0 5.8 1.5 5.8 3.3C5.8 5.5 4.6 7.8 3.6 10.5C2.8 12.8 2.2 15 2.4 17.5L2.6 19.8H14.6C15.2 17 15.5 14.5 14.8 12C14 9 11.8 5.8 11.8 3.6C11.8 1.5 10.4 0 8.3 0Z" fill="#151515"/><path d="M7.8 7.4C5.8 8.4 3.8 12 3.6 16.5L3.8 19.2H11.6C12.4 15 12 10.2 10.2 8C9.5 7.2 8.6 7.1 7.8 7.4Z" fill="#fff"/><circle cx="7.2" cy="3.4" r="0.9" fill="#fff"/><circle cx="9.6" cy="3.4" r="0.9" fill="#fff"/><ellipse cx="8.3" cy="6" rx="2.4" ry="1.4" fill="#f4a500"/><path d="M0 15.8L3.8 13.8L6.4 18.8L4.6 20.7L1.2 19.6Z" fill="#f4a500"/><path d="M17.2 16.8L13.4 14.6L10.8 19L12.6 20.8L16 19.8Z" fill="#f4a500"/></svg>
<div class="a" style="left:110px;top:615px;width:220px;height:29px;border-radius:13px;overflow:hidden"><div class="a" style="left:0px;top:0px;width:10px;height:15px;background:#d3d4d6"></div><div class="a" style="left:10px;top:0px;width:15px;height:15px;background:#d8d9db"></div><div class="a" style="left:25px;top:0px;width:15px;height:15px;background:#d4d5d7"></div><div class="a" style="left:40px;top:0px;width:15px;height:15px;background:#d8d9db"></div><div class="a" style="left:55px;top:0px;width:15px;height:15px;background:#e0e1e3"></div><div class="a" style="left:70px;top:0px;width:15px;height:15px;background:#d7d8da"></div><div class="a" style="left:85px;top:0px;width:15px;height:15px;background:#d5d6d8"></div><div class="a" style="left:100px;top:0px;width:15px;height:15px;background:#dcdddf"></div><div class="a" style="left:115px;top:0px;width:15px;height:15px;background:#e5e6e8"></div><div class="a" style="left:130px;top:0px;width:15px;height:15px;background:#d3d4d6"></div><div class="a" style="left:145px;top:0px;width:15px;height:15px;background:#d5d6d8"></div><div class="a" style="left:160px;top:0px;width:15px;height:15px;background:#d2d3d5"></div><div class="a" style="left:175px;top:0px;width:15px;height:15px;background:#e4e5e7"></div><div class="a" style="left:190px;top:0px;width:15px;height:15px;background:#d6d7d9"></div><div class="a" style="left:205px;top:0px;width:15px;height:15px;background:#e3e4e6"></div><div class="a" style="left:0px;top:15px;width:10px;height:14px;background:#eff0f2"></div><div class="a" style="left:10px;top:15px;width:15px;height:14px;background:#f7f8fa"></div><div class="a" style="left:25px;top:15px;width:15px;height:14px;background:#ecedef"></div><div class="a" style="left:40px;top:15px;width:15px;height:14px;background:#eeeff1"></div><div class="a" style="left:55px;top:15px;width:15px;height:14px;background:#f2f3f5"></div></div>
<svg class="a" style="left:83px;top:651px" width="18" height="21" viewBox="0 0 18 21"><path d="M8.3 0C6.6 0 5.8 1.5 5.8 3.3C5.8 5.5 4.6 7.8 3.6 10.5C2.8 12.8 2.2 15 2.4 17.5L2.6 19.8H14.6C15.2 17 15.5 14.5 14.8 12C14 9 11.8 5.8 11.8 3.6C11.8 1.5 10.4 0 8.3 0Z" fill="#151515"/><path d="M7.8 7.4C5.8 8.4 3.8 12 3.6 16.5L3.8 19.2H11.6C12.4 15 12 10.2 10.2 8C9.5 7.2 8.6 7.1 7.8 7.4Z" fill="#fff"/><circle cx="7.2" cy="3.4" r="0.9" fill="#fff"/><circle cx="9.6" cy="3.4" r="0.9" fill="#fff"/><ellipse cx="8.3" cy="6" rx="2.4" ry="1.4" fill="#f4a500"/><path d="M0 15.8L3.8 13.8L6.4 18.8L4.6 20.7L1.2 19.6Z" fill="#f4a500"/><path d="M17.2 16.8L13.4 14.6L10.8 19L12.6 20.8L16 19.8Z" fill="#f4a500"/></svg>
<div class="a" style="left:110px;top:646px;width:116px;height:29px;border-radius:13px;overflow:hidden"><div class="a" style="left:0px;top:0px;width:10px;height:14px;background:#f8f9fb"></div><div class="a" style="left:10px;top:0px;width:15px;height:14px;background:#f0f1f3"></div><div class="a" style="left:25px;top:0px;width:15px;height:14px;background:#f4f5f7"></div><div class="a" style="left:40px;top:0px;width:15px;height:14px;background:#f7f8fa"></div><div class="a" style="left:55px;top:0px;width:15px;height:14px;background:#f7f8fa"></div><div class="a" style="left:70px;top:0px;width:15px;height:14px;background:#fbfcfe"></div><div class="a" style="left:85px;top:0px;width:15px;height:14px;background:#eff0f2"></div><div class="a" style="left:100px;top:0px;width:15px;height:14px;background:#eff0f2"></div><div class="a" style="left:115px;top:0px;width:1px;height:14px;background:#fbfcfe"></div><div class="a" style="left:0px;top:14px;width:10px;height:15px;background:#ecedef"></div><div class="a" style="left:10px;top:14px;width:15px;height:15px;background:#edeef0"></div><div class="a" style="left:25px;top:14px;width:15px;height:15px;background:#edeef0"></div><div class="a" style="left:40px;top:14px;width:15px;height:15px;background:#e7e8ea"></div><div class="a" style="left:55px;top:14px;width:15px;height:15px;background:#e0e1e3"></div><div class="a" style="left:70px;top:14px;width:15px;height:15px;background:#e2e3e5"></div><div class="a" style="left:85px;top:14px;width:15px;height:15px;background:#e1e2e4"></div><div class="a" style="left:100px;top:14px;width:15px;height:15px;background:#e8e9eb"></div><div class="a" style="left:115px;top:14px;width:1px;height:15px;background:#e6e7e9"></div></div>
<svg class="a" style="left:83px;top:690px" width="18" height="21" viewBox="0 0 18 21"><path d="M8.3 0C6.6 0 5.8 1.5 5.8 3.3C5.8 5.5 4.6 7.8 3.6 10.5C2.8 12.8 2.2 15 2.4 17.5L2.6 19.8H14.6C15.2 17 15.5 14.5 14.8 12C14 9 11.8 5.8 11.8 3.6C11.8 1.5 10.4 0 8.3 0Z" fill="#151515"/><path d="M7.8 7.4C5.8 8.4 3.8 12 3.6 16.5L3.8 19.2H11.6C12.4 15 12 10.2 10.2 8C9.5 7.2 8.6 7.1 7.8 7.4Z" fill="#fff"/><circle cx="7.2" cy="3.4" r="0.9" fill="#fff"/><circle cx="9.6" cy="3.4" r="0.9" fill="#fff"/><ellipse cx="8.3" cy="6" rx="2.4" ry="1.4" fill="#f4a500"/><path d="M0 15.8L3.8 13.8L6.4 18.8L4.6 20.7L1.2 19.6Z" fill="#f4a500"/><path d="M17.2 16.8L13.4 14.6L10.8 19L12.6 20.8L16 19.8Z" fill="#f4a500"/></svg>
<div class="a" style="left:109px;top:689px;font-size:18px;line-height:22px;color:#333;white-space:nowrap">6</div>
<div class="a" style="left:118px;top:690px;width:122px;height:22px;border-radius:13px;overflow:hidden"><div class="a" style="left:0px;top:0px;width:2px;height:22px;background:#edeef0"></div><div class="a" style="left:2px;top:0px;width:15px;height:22px;background:#f4f5f7"></div><div class="a" style="left:17px;top:0px;width:15px;height:22px;background:#e3e4e6"></div><div class="a" style="left:32px;top:0px;width:15px;height:22px;background:#eeeff1"></div><div class="a" style="left:47px;top:0px;width:15px;height:22px;background:#dedfe1"></div><div class="a" style="left:62px;top:0px;width:15px;height:22px;background:#e4e5e7"></div><div class="a" style="left:77px;top:0px;width:15px;height:22px;background:#eeeff1"></div><div class="a" style="left:92px;top:0px;width:15px;height:22px;background:#e9eaec"></div><div class="a" style="left:107px;top:0px;width:15px;height:22px;background:#e2e3e5"></div></div>
<svg class="a" style="left:83px;top:729px" width="18" height="21" viewBox="0 0 18 21"><path d="M8.3 0C6.6 0 5.8 1.5 5.8 3.3C5.8 5.5 4.6 7.8 3.6 10.5C2.8 12.8 2.2 15 2.4 17.5L2.6 19.8H14.6C15.2 17 15.5 14.5 14.8 12C14 9 11.8 5.8 11.8 3.6C11.8 1.5 10.4 0 8.3 0Z" fill="#151515"/><path d="M7.8 7.4C5.8 8.4 3.8 12 3.6 16.5L3.8 19.2H11.6C12.4 15 12 10.2 10.2 8C9.5 7.2 8.6 7.1 7.8 7.4Z" fill="#fff"/><circle cx="7.2" cy="3.4" r="0.9" fill="#fff"/><circle cx="9.6" cy="3.4" r="0.9" fill="#fff"/><ellipse cx="8.3" cy="6" rx="2.4" ry="1.4" fill="#f4a500"/><path d="M0 15.8L3.8 13.8L6.4 18.8L4.6 20.7L1.2 19.6Z" fill="#f4a500"/><path d="M17.2 16.8L13.4 14.6L10.8 19L12.6 20.8L16 19.8Z" fill="#f4a500"/></svg>
<div class="a" style="left:109px;top:728px;font-size:18px;line-height:22px;color:#333;white-space:nowrap">6</div>
<div class="a" style="left:110px;top:718px;width:130px;height:31px;border-radius:13px;overflow:hidden"><div class="a" style="left:0px;top:0px;width:10px;height:16px;background:#fdfeff"></div><div class="a" style="left:10px;top:0px;width:15px;height:16px;background:#ecedef"></div><div class="a" style="left:25px;top:0px;width:15px;height:16px;background:#fcfdff"></div><div class="a" style="left:40px;top:0px;width:15px;height:16px;background:#f5f6f8"></div><div class="a" style="left:55px;top:0px;width:15px;height:16px;background:#eeeff1"></div><div class="a" style="left:70px;top:0px;width:15px;height:16px;background:#f4f5f7"></div><div class="a" style="left:85px;top:0px;width:15px;height:16px;background:#fcfdff"></div><div class="a" style="left:100px;top:0px;width:15px;height:16px;background:#f7f8fa"></div><div class="a" style="left:115px;top:0px;width:15px;height:16px;background:#f1f2f4"></div><div class="a" style="left:0px;top:16px;width:10px;height:15px;background:#e9eaec"></div><div class="a" style="left:10px;top:16px;width:15px;height:15px;background:#e5e6e8"></div><div class="a" style="left:25px;top:16px;width:15px;height:15px;background:#eff0f2"></div><div class="a" style="left:40px;top:16px;width:15px;height:15px;background:#eff0f2"></div><div class="a" style="left:55px;top:16px;width:15px;height:15px;background:#eeeff1"></div><div class="a" style="left:70px;top:16px;width:15px;height:15px;background:#e8e9eb"></div><div class="a" style="left:85px;top:16px;width:15px;height:15px;background:#f2f3f5"></div><div class="a" style="left:100px;top:16px;width:15px;height:15px;background:#e5e6e8"></div><div class="a" style="left:115px;top:16px;width:15px;height:15px;background:#f1f2f4"></div></div>
<svg class="a" style="left:81px;top:769px" width="21" height="21" viewBox="0 0 21 21"><path d="M0 3L9 1.6V9.8H0Z M10.3 1.4L21 0V9.8H10.3Z M0 11.1H9V19.4L0 18Z M10.3 11.1H21V21L10.3 19.6Z" fill="#1a6fd6"/></svg>
<div class="a" style="left:105px;top:765px;width:225px;height:30px;border-radius:13px;overflow:hidden"><div class="a" style="left:0px;top:0px;width:15px;height:15px;background:#e4e5e7"></div><div class="a" style="left:15px;top:0px;width:15px;height:15px;background:#e5e6e8"></div><div class="a" style="left:30px;top:0px;width:15px;height:15px;background:#eaebed"></div><div class="a" style="left:45px;top:0px;width:15px;height:15px;background:#e5e6e8"></div><div class="a" style="left:60px;top:0px;width:15px;height:15px;background:#e4e5e7"></div><div class="a" style="left:75px;top:0px;width:15px;height:15px;background:#eeeff1"></div><div class="a" style="left:90px;top:0px;width:15px;height:15px;background:#edeef0"></div><div class="a" style="left:105px;top:0px;width:15px;height:15px;background:#e9eaec"></div><div class="a" style="left:120px;top:0px;width:15px;height:15px;background:#dedfe1"></div><div class="a" style="left:135px;top:0px;width:15px;height:15px;background:#dedfe1"></div><div class="a" style="left:150px;top:0px;width:15px;height:15px;background:#e6e7e9"></div><div class="a" style="left:165px;top:0px;width:15px;height:15px;background:#edeef0"></div><div class="a" style="left:180px;top:0px;width:15px;height:15px;background:#e6e7e9"></div><div class="a" style="left:195px;top:0px;width:15px;height:15px;background:#e4e5e7"></div><div class="a" style="left:210px;top:0px;width:15px;height:15px;background:#f4f5f7"></div><div class="a" style="left:0px;top:15px;width:15px;height:15px;background:#f7f8fa"></div><div class="a" style="left:15px;top:15px;width:15px;height:15px;background:#fafbfd"></div><div class="a" style="left:30px;top:15px;width:15px;height:15px;background:#f7f8fa"></div><div class="a" style="left:45px;top:15px;width:15px;height:15px;background:#f7f8fa"></div><div class="a" style="left:60px;top:15px;width:15px;height:15px;background:#eeeff1"></div><div class="a" style="left:75px;top:15px;width:15px;height:15px;background:#f3f4f6"></div><div class="a" style="left:90px;top:15px;width:15px;height:15px;background:#eff0f2"></div><div class="a" style="left:105px;top:15px;width:15px;height:15px;background:#f3f4f6"></div><div class="a" style="left:120px;top:15px;width:15px;height:15px;background:#fbfcfe"></div><div class="a" style="left:135px;top:15px;width:15px;height:15px;background:#f2f3f5"></div><div class="a" style="left:150px;top:15px;width:15px;height:15px;background:#f6f7f9"></div><div class="a" style="left:165px;top:15px;width:15px;height:15px;background:#f2f3f5"></div><div class="a" style="left:180px;top:15px;width:15px;height:15px;background:#fbfcfe"></div><div class="a" style="left:195px;top:15px;width:15px;height:15px;background:#ecedef"></div><div class="a" style="left:210px;top:15px;width:15px;height:15px;background:#fbfcfe"></div></div>
<svg class="a" style="left:83px;top:807px" width="18" height="21" viewBox="0 0 18 21"><path d="M8.3 0C6.6 0 5.8 1.5 5.8 3.3C5.8 5.5 4.6 7.8 3.6 10.5C2.8 12.8 2.2 15 2.4 17.5L2.6 19.8H14.6C15.2 17 15.5 14.5 14.8 12C14 9 11.8 5.8 11.8 3.6C11.8 1.5 10.4 0 8.3 0Z" fill="#151515"/><path d="M7.8 7.4C5.8 8.4 3.8 12 3.6 16.5L3.8 19.2H11.6C12.4 15 12 10.2 10.2 8C9.5 7.2 8.6 7.1 7.8 7.4Z" fill="#fff"/><circle cx="7.2" cy="3.4" r="0.9" fill="#fff"/><circle cx="9.6" cy="3.4" r="0.9" fill="#fff"/><ellipse cx="8.3" cy="6" rx="2.4" ry="1.4" fill="#f4a500"/><path d="M0 15.8L3.8 13.8L6.4 18.8L4.6 20.7L1.2 19.6Z" fill="#f4a500"/><path d="M17.2 16.8L13.4 14.6L10.8 19L12.6 20.8L16 19.8Z" fill="#f4a500"/></svg>
<div class="a" style="left:100px;top:809px;width:236px;height:30px;border-radius:13px;overflow:hidden"><div class="a" style="left:0px;top:0px;width:5px;height:15px;background:#e6e7e9"></div><div class="a" style="left:5px;top:0px;width:15px;height:15px;background:#dddee0"></div><div class="a" style="left:20px;top:0px;width:15px;height:15px;background:#e6e7e9"></div><div class="a" style="left:35px;top:0px;width:15px;height:15px;background:#d4d5d7"></div><div class="a" style="left:50px;top:0px;width:15px;height:15px;background:#e7e8ea"></div><div class="a" style="left:65px;top:0px;width:15px;height:15px;background:#d5d6d8"></div><div class="a" style="left:80px;top:0px;width:15px;height:15px;background:#dedfe1"></div><div class="a" style="left:95px;top:0px;width:15px;height:15px;background:#e8e9eb"></div><div class="a" style="left:110px;top:0px;width:15px;height:15px;background:#eaebed"></div><div class="a" style="left:125px;top:0px;width:15px;height:15px;background:#d8d9db"></div><div class="a" style="left:140px;top:0px;width:15px;height:15px;background:#e1e2e4"></div><div class="a" style="left:155px;top:0px;width:15px;height:15px;background:#d7d8da"></div><div class="a" style="left:170px;top:0px;width:15px;height:15px;background:#dfe0e2"></div><div class="a" style="left:185px;top:0px;width:15px;height:15px;background:#e6e7e9"></div><div class="a" style="left:200px;top:0px;width:15px;height:15px;background:#dcdddf"></div><div class="a" style="left:215px;top:0px;width:15px;height:15px;background:#d4d5d7"></div><div class="a" style="left:230px;top:0px;width:6px;height:15px;background:#e9eaec"></div><div class="a" style="left:0px;top:15px;width:5px;height:15px;background:#f8f9fb"></div><div class="a" style="left:5px;top:15px;width:15px;height:15px;background:#fafbfd"></div><div class="a" style="left:20px;top:15px;width:15px;height:15px;background:#f8f9fb"></div><div class="a" style="left:35px;top:15px;width:15px;height:15px;background:#eeeff1"></div><div class="a" style="left:50px;top:15px;width:15px;height:15px;background:#f1f2f4"></div><div class="a" style="left:65px;top:15px;width:15px;height:15px;background:#f1f2f4"></div><div class="a" style="left:80px;top:15px;width:15px;height:15px;background:#f0f1f3"></div><div class="a" style="left:95px;top:15px;width:15px;height:15px;background:#ecedef"></div><div class="a" style="left:110px;top:15px;width:15px;height:15px;background:#f0f1f3"></div><div class="a" style="left:125px;top:15px;width:15px;height:15px;background:#fafbfd"></div><div class="a" style="left:140px;top:15px;width:15px;height:15px;background:#f0f1f3"></div></div>
<div class="a" style="left:338px;top:808px;font-size:18px;line-height:22px;color:#333;white-space:nowrap">..</div>
<svg class="a" style="left:83px;top:846px" width="18" height="21" viewBox="0 0 18 21"><path d="M8.3 0C6.6 0 5.8 1.5 5.8 3.3C5.8 5.5 4.6 7.8 3.6 10.5C2.8 12.8 2.2 15 2.4 17.5L2.6 19.8H14.6C15.2 17 15.5 14.5 14.8 12C14 9 11.8 5.8 11.8 3.6C11.8 1.5 10.4 0 8.3 0Z" fill="#151515"/><path d="M7.8 7.4C5.8 8.4 3.8 12 3.6 16.5L3.8 19.2H11.6C12.4 15 12 10.2 10.2 8C9.5 7.2 8.6 7.1 7.8 7.4Z" fill="#fff"/><circle cx="7.2" cy="3.4" r="0.9" fill="#fff"/><circle cx="9.6" cy="3.4" r="0.9" fill="#fff"/><ellipse cx="8.3" cy="6" rx="2.4" ry="1.4" fill="#f4a500"/><path d="M0 15.8L3.8 13.8L6.4 18.8L4.6 20.7L1.2 19.6Z" fill="#f4a500"/><path d="M17.2 16.8L13.4 14.6L10.8 19L12.6 20.8L16 19.8Z" fill="#f4a500"/></svg>
<div class="a" style="left:102px;top:843px;width:208px;height:28px;border-radius:13px;overflow:hidden"><div class="a" style="left:0px;top:0px;width:3px;height:14px;background:#fbfcfe"></div><div class="a" style="left:3px;top:0px;width:15px;height:14px;background:#f7f8fa"></div><div class="a" style="left:18px;top:0px;width:15px;height:14px;background:#f0f1f3"></div><div class="a" style="left:33px;top:0px;width:15px;height:14px;background:#fdfeff"></div><div class="a" style="left:48px;top:0px;width:15px;height:14px;background:#fdfeff"></div><div class="a" style="left:63px;top:0px;width:15px;height:14px;background:#f0f1f3"></div><div class="a" style="left:78px;top:0px;width:15px;height:14px;background:#ecedef"></div><div class="a" style="left:93px;top:0px;width:15px;height:14px;background:#ecedef"></div><div class="a" style="left:108px;top:0px;width:15px;height:14px;background:#eff0f2"></div><div class="a" style="left:123px;top:0px;width:15px;height:14px;background:#fcfdff"></div><div class="a" style="left:138px;top:0px;width:15px;height:14px;background:#f0f1f3"></div><div class="a" style="left:153px;top:0px;width:15px;height:14px;background:#f9fafc"></div><div class="a" style="left:168px;top:0px;width:15px;height:14px;background:#f2f3f5"></div><div class="a" style="left:183px;top:0px;width:15px;height:14px;background:#f2f3f5"></div><div class="a" style="left:198px;top:0px;width:10px;height:14px;background:#ecedef"></div><div class="a" style="left:0px;top:14px;width:3px;height:14px;background:#e6e7e9"></div><div class="a" style="left:3px;top:14px;width:15px;height:14px;background:#e4e5e7"></div><div class="a" style="left:18px;top:14px;width:15px;height:14px;background:#e7e8ea"></div><div class="a" style="left:33px;top:14px;width:15px;height:14px;background:#eeeff1"></div><div class="a" style="left:48px;top:14px;width:15px;height:14px;background:#e5e6e8"></div><div class="a" style="left:63px;top:14px;width:15px;height:14px;background:#f0f1f3"></div><div class="a" style="left:78px;top:14px;width:15px;height:14px;background:#e8e9eb"></div><div class="a" style="left:93px;top:14px;width:15px;height:14px;background:#e6e7e9"></div><div class="a" style="left:108px;top:14px;width:15px;height:14px;background:#eff0f2"></div><div class="a" style="left:123px;top:14px;width:15px;height:14px;background:#ebecee"></div><div class="a" style="left:138px;top:14px;width:15px;height:14px;background:#e2e3e5"></div><div class="a" style="left:153px;top:14px;width:15px;height:14px;background:#dfe0e2"></div><div class="a" style="left:168px;top:14px;width:15px;height:14px;background:#e9eaec"></div><div class="a" style="left:183px;top:14px;width:15px;height:14px;background:#ecedef"></div><div class="a" style="left:198px;top:14px;width:10px;height:14px;background:#f3f4f6"></div></div>
<svg class="a" style="left:83px;top:926px" width="18" height="21" viewBox="0 0 18 21"><path d="M8.3 0C6.6 0 5.8 1.5 5.8 3.3C5.8 5.5 4.6 7.8 3.6 10.5C2.8 12.8 2.2 15 2.4 17.5L2.6 19.8H14.6C15.2 17 15.5 14.5 14.8 12C14 9 11.8 5.8 11.8 3.6C11.8 1.5 10.4 0 8.3 0Z" fill="#151515"/><path d="M7.8 7.4C5.8 8.4 3.8 12 3.6 16.5L3.8 19.2H11.6C12.4 15 12 10.2 10.2 8C9.5 7.2 8.6 7.1 7.8 7.4Z" fill="#fff"/><circle cx="7.2" cy="3.4" r="0.9" fill="#fff"/><circle cx="9.6" cy="3.4" r="0.9" fill="#fff"/><ellipse cx="8.3" cy="6" rx="2.4" ry="1.4" fill="#f4a500"/><path d="M0 15.8L3.8 13.8L6.4 18.8L4.6 20.7L1.2 19.6Z" fill="#f4a500"/><path d="M17.2 16.8L13.4 14.6L10.8 19L12.6 20.8L16 19.8Z" fill="#f4a500"/></svg>
<div class="a" style="left:109px;top:925px;font-size:18px;line-height:22px;color:#333;white-space:nowrap">C</div>
<div class="a" style="left:110px;top:914px;width:185px;height:31px;border-radius:13px;overflow:hidden"><div class="a" style="left:15px;top:0px;width:10px;height:15px;background:#fcfdff"></div><div class="a" style="left:25px;top:0px;width:15px;height:15px;background:#f9fafc"></div><div class="a" style="left:40px;top:0px;width:15px;height:15px;background:#fcfdff"></div><div class="a" style="left:55px;top:0px;width:15px;height:15px;background:#f0f1f3"></div><div class="a" style="left:70px;top:0px;width:15px;height:15px;background:#fdfeff"></div><div class="a" style="left:85px;top:0px;width:15px;height:15px;background:#f0f1f3"></div><div class="a" style="left:100px;top:0px;width:15px;height:15px;background:#fcfdff"></div><div class="a" style="left:115px;top:0px;width:15px;height:15px;background:#fcfdff"></div><div class="a" style="left:130px;top:0px;width:15px;height:15px;background:#ecedef"></div><div class="a" style="left:145px;top:0px;width:15px;height:15px;background:#fafbfd"></div><div class="a" style="left:160px;top:0px;width:15px;height:15px;background:#f1f2f4"></div><div class="a" style="left:175px;top:0px;width:9px;height:15px;background:#ecedef"></div><div class="a" style="left:0px;top:15px;width:10px;height:16px;background:#e2e3e5"></div><div class="a" style="left:10px;top:15px;width:15px;height:16px;background:#e3e4e6"></div><div class="a" style="left:25px;top:15px;width:15px;height:16px;background:#e2e3e5"></div><div class="a" style="left:40px;top:15px;width:15px;height:16px;background:#edeef0"></div><div class="a" style="left:55px;top:15px;width:15px;height:16px;background:#f1f2f4"></div><div class="a" style="left:70px;top:15px;width:15px;height:16px;background:#e1e2e4"></div><div class="a" style="left:85px;top:15px;width:15px;height:16px;background:#eff0f2"></div><div class="a" style="left:100px;top:15px;width:15px;height:16px;background:#dfe0e2"></div><div class="a" style="left:115px;top:15px;width:15px;height:16px;background:#e8e9eb"></div><div class="a" style="left:130px;top:15px;width:15px;height:16px;background:#f3f4f6"></div><div class="a" style="left:145px;top:15px;width:15px;height:16px;background:#eeeff1"></div><div class="a" style="left:160px;top:15px;width:15px;height:16px;background:#eeeff1"></div><div class="a" style="left:175px;top:15px;width:10px;height:16px;background:#eff0f2"></div></div>
<svg class="a" style="left:83px;top:964px" width="18" height="21" viewBox="0 0 18 21"><path d="M8.3 0C6.6 0 5.8 1.5 5.8 3.3C5.8 5.5 4.6 7.8 3.6 10.5C2.8 12.8 2.2 15 2.4 17.5L2.6 19.8H14.6C15.2 17 15.5 14.5 14.8 12C14 9 11.8 5.8 11.8 3.6C11.8 1.5 10.4 0 8.3 0Z" fill="#151515"/><path d="M7.8 7.4C5.8 8.4 3.8 12 3.6 16.5L3.8 19.2H11.6C12.4 15 12 10.2 10.2 8C9.5 7.2 8.6 7.1 7.8 7.4Z" fill="#fff"/><circle cx="7.2" cy="3.4" r="0.9" fill="#fff"/><circle cx="9.6" cy="3.4" r="0.9" fill="#fff"/><ellipse cx="8.3" cy="6" rx="2.4" ry="1.4" fill="#f4a500"/><path d="M0 15.8L3.8 13.8L6.4 18.8L4.6 20.7L1.2 19.6Z" fill="#f4a500"/><path d="M17.2 16.8L13.4 14.6L10.8 19L12.6 20.8L16 19.8Z" fill="#f4a500"/></svg>
<div class="a" style="left:102px;top:960px;width:198px;height:29px;border-radius:13px;overflow:hidden"><div class="a" style="left:0px;top:0px;width:3px;height:15px;background:#edeef0"></div><div class="a" style="left:3px;top:0px;width:15px;height:15px;background:#e1e2e4"></div><div class="a" style="left:18px;top:0px;width:15px;height:15px;background:#eff0f2"></div><div class="a" style="left:33px;top:0px;width:15px;height:15px;background:#dfe0e2"></div><div class="a" style="left:48px;top:0px;width:15px;height:15px;background:#e5e6e8"></div><div class="a" style="left:63px;top:0px;width:15px;height:15px;background:#e4e5e7"></div><div class="a" style="left:78px;top:0px;width:15px;height:15px;background:#e6e7e9"></div><div class="a" style="left:93px;top:0px;width:15px;height:15px;background:#dfe0e2"></div><div class="a" style="left:108px;top:0px;width:15px;height:15px;background:#e1e2e4"></div><div class="a" style="left:123px;top:0px;width:15px;height:15px;background:#eeeff1"></div><div class="a" style="left:138px;top:0px;width:15px;height:15px;background:#ecedef"></div><div class="a" style="left:153px;top:0px;width:15px;height:15px;background:#eff0f2"></div><div class="a" style="left:168px;top:0px;width:15px;height:15px;background:#dedfe1"></div><div class="a" style="left:183px;top:0px;width:15px;height:15px;background:#e0e1e3"></div><div class="a" style="left:0px;top:15px;width:3px;height:14px;background:#fafbfd"></div><div class="a" style="left:3px;top:15px;width:15px;height:14px;background:#f6f7f9"></div><div class="a" style="left:18px;top:15px;width:15px;height:14px;background:#fcfdff"></div><div class="a" style="left:33px;top:15px;width:15px;height:14px;background:#fcfdff"></div><div class="a" style="left:48px;top:15px;width:15px;height:14px;background:#f2f3f5"></div><div class="a" style="left:63px;top:15px;width:15px;height:14px;background:#f4f5f7"></div><div class="a" style="left:78px;top:15px;width:15px;height:14px;background:#fafbfd"></div><div class="a" style="left:93px;top:15px;width:15px;height:14px;background:#fcfdff"></div><div class="a" style="left:108px;top:15px;width:15px;height:14px;background:#fdfeff"></div><div class="a" style="left:123px;top:15px;width:15px;height:14px;background:#fbfcfe"></div><div class="a" style="left:138px;top:15px;width:15px;height:14px;background:#fcfdff"></div><div class="a" style="left:153px;top:15px;width:15px;height:14px;background:#f3f4f6"></div><div class="a" style="left:168px;top:15px;width:15px;height:14px;background:#fcfdff"></div><div class="a" style="left:183px;top:15px;width:15px;height:14px;background:#f4f5f7"></div></div>
<svg class="a" style="left:81px;top:1042px" width="21" height="21" viewBox="0 0 21 21"><circle cx="10.5" cy="10.5" r="10.4" fill="#c2650a"/><circle cx="10.5" cy="10.5" r="5.7" fill="none" stroke="#fff" stroke-width="1.8"/><circle cx="10.5" cy="10.5" r="3.4" fill="#c2650a"/><circle cx="3.6" cy="10.5" r="2.3" fill="#c2650a"/><circle cx="14" cy="4.4" r="2.3" fill="#c2650a"/><circle cx="14" cy="16.6" r="2.3" fill="#c2650a"/><circle cx="3.6" cy="10.5" r="1.5" fill="#fff"/><circle cx="14" cy="4.4" r="1.5" fill="#fff"/><circle cx="14" cy="16.6" r="1.5" fill="#fff"/></svg>
<div class="a" style="left:99px;top:1037px;width:239px;height:27px;border-radius:13px;overflow:hidden"><div class="a" style="left:0px;top:0px;width:6px;height:13px;background:#fdfeff"></div><div class="a" style="left:6px;top:0px;width:15px;height:13px;background:#f2f3f5"></div><div class="a" style="left:21px;top:0px;width:15px;height:13px;background:#fafbfd"></div><div class="a" style="left:36px;top:0px;width:15px;height:13px;background:#f0f1f3"></div><div class="a" style="left:51px;top:0px;width:15px;height:13px;background:#f9fafc"></div><div class="a" style="left:66px;top:0px;width:15px;height:13px;background:#eff0f2"></div><div class="a" style="left:81px;top:0px;width:15px;height:13px;background:#f8f9fb"></div><div class="a" style="left:96px;top:0px;width:15px;height:13px;background:#fafbfd"></div><div class="a" style="left:111px;top:0px;width:15px;height:13px;background:#f6f7f9"></div><div class="a" style="left:126px;top:0px;width:15px;height:13px;background:#eeeff1"></div><div class="a" style="left:141px;top:0px;width:15px;height:13px;background:#f3f4f6"></div><div class="a" style="left:156px;top:0px;width:15px;height:13px;background:#f9fafc"></div><div class="a" style="left:171px;top:0px;width:15px;height:13px;background:#eeeff1"></div><div class="a" style="left:186px;top:0px;width:15px;height:13px;background:#f2f3f5"></div><div class="a" style="left:201px;top:0px;width:15px;height:13px;background:#f5f6f8"></div><div class="a" style="left:216px;top:0px;width:15px;height:13px;background:#eff0f2"></div><div class="a" style="left:231px;top:0px;width:8px;height:13px;background:#f0f1f3"></div><div class="a" style="left:0px;top:13px;width:6px;height:14px;background:#f4f5f7"></div><div class="a" style="left:6px;top:13px;width:15px;height:14px;background:#f2f3f5"></div><div class="a" style="left:21px;top:13px;width:15px;height:14px;background:#f3f4f6"></div><div class="a" style="left:36px;top:13px;width:15px;height:14px;background:#e9eaec"></div><div class="a" style="left:51px;top:13px;width:15px;height:14px;background:#e2e3e5"></div><div class="a" style="left:66px;top:13px;width:15px;height:14px;background:#e6e7e9"></div><div class="a" style="left:81px;top:13px;width:15px;height:14px;background:#e2e3e5"></div><div class="a" style="left:96px;top:13px;width:15px;height:14px;background:#ecedef"></div><div class="a" style="left:111px;top:13px;width:15px;height:14px;background:#e5e6e8"></div><div class="a" style="left:126px;top:13px;width:15px;height:14px;background:#e1e2e4"></div><div class="a" style="left:141px;top:13px;width:15px;height:14px;background:#eaebed"></div><div class="a" style="left:156px;top:13px;width:15px;height:14px;background:#edeef0"></div><div class="a" style="left:171px;top:13px;width:15px;height:14px;background:#e3e4e6"></div><div class="a" style="left:186px;top:13px;width:15px;height:14px;background:#f3f4f6"></div><div class="a" style="left:201px;top:13px;width:15px;height:14px;background:#e5e6e8"></div><div class="a" style="left:216px;top:13px;width:15px;height:14px;background:#e3e4e6"></div><div class="a" style="left:231px;top:13px;width:8px;height:14px;background:#f4f5f7"></div></div>
<svg class="a" style="left:81px;top:1081px" width="21" height="21" viewBox="0 0 21 21"><circle cx="10.5" cy="10.5" r="10.4" fill="#c2650a"/><circle cx="10.5" cy="10.5" r="5.7" fill="none" stroke="#fff" stroke-width="1.8"/><circle cx="10.5" cy="10.5" r="3.4" fill="#c2650a"/><circle cx="3.6" cy="10.5" r="2.3" fill="#c2650a"/><circle cx="14" cy="4.4" r="2.3" fill="#c2650a"/><circle cx="14" cy="16.6" r="2.3" fill="#c2650a"/><circle cx="3.6" cy="10.5" r="1.5" fill="#fff"/><circle cx="14" cy="4.4" r="1.5" fill="#fff"/><circle cx="14" cy="16.6" r="1.5" fill="#fff"/></svg>
<div class="a" style="left:110px;top:1080px;width:221px;height:26px;border-radius:13px;overflow:hidden"><div class="a" style="left:0px;top:0px;width:10px;height:13px;background:#ebecee"></div><div class="a" style="left:10px;top:0px;width:15px;height:13px;background:#eeeff1"></div><div class="a" style="left:25px;top:0px;width:15px;height:13px;background:#eaebed"></div><div class="a" style="left:40px;top:0px;width:15px;height:13px;background:#e8e9eb"></div><div class="a" style="left:55px;top:0px;width:15px;height:13px;background:#ebecee"></div><div class="a" style="left:70px;top:0px;width:15px;height:13px;background:#e4e5e7"></div><div class="a" style="left:85px;top:0px;width:15px;height:13px;background:#e9eaec"></div><div class="a" style="left:100px;top:0px;width:15px;height:13px;background:#e8e9eb"></div><div class="a" style="left:115px;top:0px;width:15px;height:13px;background:#e0e1e3"></div><div class="a" style="left:130px;top:0px;width:15px;height:13px;background:#e9eaec"></div><div class="a" style="left:145px;top:0px;width:15px;height:13px;background:#dedfe1"></div><div class="a" style="left:160px;top:0px;width:15px;height:13px;background:#e8e9eb"></div><div class="a" style="left:175px;top:0px;width:15px;height:13px;background:#eff0f2"></div><div class="a" style="left:190px;top:0px;width:15px;height:13px;background:#ecedef"></div><div class="a" style="left:205px;top:0px;width:15px;height:13px;background:#ecedef"></div><div class="a" style="left:220px;top:0px;width:1px;height:13px;background:#f4f5f7"></div><div class="a" style="left:0px;top:13px;width:10px;height:13px;background:#ecedef"></div><div class="a" style="left:10px;top:13px;width:15px;height:13px;background:#f8f9fb"></div><div class="a" style="left:25px;top:13px;width:15px;height:13px;background:#f6f7f9"></div><div class="a" style="left:40px;top:13px;width:15px;height:13px;background:#fcfdff"></div><div class="a" style="left:55px;top:13px;width:15px;height:13px;background:#f5f6f8"></div><div class="a" style="left:70px;top:13px;width:15px;height:13px;background:#fcfdff"></div><div class="a" style="left:85px;top:13px;width:15px;height:13px;background:#eeeff1"></div><div class="a" style="left:100px;top:13px;width:15px;height:13px;background:#eff0f2"></div><div class="a" style="left:115px;top:13px;width:15px;height:13px;background:#f3f4f6"></div><div class="a" style="left:130px;top:13px;width:15px;height:13px;background:#eff0f2"></div><div class="a" style="left:145px;top:13px;width:15px;height:13px;background:#eeeff1"></div><div class="a" style="left:160px;top:13px;width:15px;height:13px;background:#f4f5f7"></div><div class="a" style="left:175px;top:13px;width:15px;height:13px;background:#f4f5f7"></div><div class="a" style="left:190px;top:13px;width:15px;height:13px;background:#edeef0"></div><div class="a" style="left:205px;top:13px;width:15px;height:13px;background:#f1f2f4"></div><div class="a" style="left:220px;top:13px;width:1px;height:13px;background:#f4f5f7"></div></div>
<svg class="a" style="left:83px;top:1121px" width="18" height="21" viewBox="0 0 18 21"><path d="M8.3 0C6.6 0 5.8 1.5 5.8 3.3C5.8 5.5 4.6 7.8 3.6 10.5C2.8 12.8 2.2 15 2.4 17.5L2.6 19.8H14.6C15.2 17 15.5 14.5 14.8 12C14 9 11.8 5.8 11.8 3.6C11.8 1.5 10.4 0 8.3 0Z" fill="#151515"/><path d="M7.8 7.4C5.8 8.4 3.8 12 3.6 16.5L3.8 19.2H11.6C12.4 15 12 10.2 10.2 8C9.5 7.2 8.6 7.1 7.8 7.4Z" fill="#fff"/><circle cx="7.2" cy="3.4" r="0.9" fill="#fff"/><circle cx="9.6" cy="3.4" r="0.9" fill="#fff"/><ellipse cx="8.3" cy="6" rx="2.4" ry="1.4" fill="#f4a500"/><path d="M0 15.8L3.8 13.8L6.4 18.8L4.6 20.7L1.2 19.6Z" fill="#f4a500"/><path d="M17.2 16.8L13.4 14.6L10.8 19L12.6 20.8L16 19.8Z" fill="#f4a500"/></svg>
<div class="a" style="left:102px;top:1115px;width:235px;height:26px;border-radius:13px;overflow:hidden"><div class="a" style="left:0px;top:0px;width:3px;height:12px;background:#f0f1f3"></div><div class="a" style="left:3px;top:0px;width:15px;height:12px;background:#f9fafc"></div><div class="a" style="left:18px;top:0px;width:15px;height:12px;background:#f4f5f7"></div><div class="a" style="left:33px;top:0px;width:15px;height:12px;background:#f8f9fb"></div><div class="a" style="left:48px;top:0px;width:15px;height:12px;background:#f0f1f3"></div><div class="a" style="left:63px;top:0px;width:15px;height:12px;background:#fdfeff"></div><div class="a" style="left:78px;top:0px;width:15px;height:12px;background:#fcfdff"></div><div class="a" style="left:93px;top:0px;width:15px;height:12px;background:#fbfcfe"></div><div class="a" style="left:108px;top:0px;width:15px;height:12px;background:#f6f7f9"></div><div class="a" style="left:123px;top:0px;width:15px;height:12px;background:#eeeff1"></div><div class="a" style="left:138px;top:0px;width:15px;height:12px;background:#f4f5f7"></div><div class="a" style="left:153px;top:0px;width:15px;height:12px;background:#edeef0"></div><div class="a" style="left:168px;top:0px;width:15px;height:12px;background:#f1f2f4"></div><div class="a" style="left:183px;top:0px;width:15px;height:12px;background:#f9fafc"></div><div class="a" style="left:198px;top:0px;width:15px;height:12px;background:#eeeff1"></div><div class="a" style="left:213px;top:0px;width:15px;height:12px;background:#f4f5f7"></div><div class="a" style="left:228px;top:0px;width:7px;height:12px;background:#ecedef"></div><div class="a" style="left:0px;top:12px;width:3px;height:14px;background:#e6e7e9"></div><div class="a" style="left:3px;top:12px;width:15px;height:14px;background:#d4d5d7"></div><div class="a" style="left:18px;top:12px;width:15px;height:14px;background:#dadbdd"></div><div class="a" style="left:33px;top:12px;width:15px;height:14px;background:#d4d5d7"></div><div class="a" style="left:48px;top:12px;width:15px;height:14px;background:#e5e6e8"></div><div class="a" style="left:63px;top:12px;width:15px;height:14px;background:#d9dadc"></div><div class="a" style="left:78px;top:12px;width:15px;height:14px;background:#d4d5d7"></div><div class="a" style="left:93px;top:12px;width:15px;height:14px;background:#dadbdd"></div><div class="a" style="left:108px;top:12px;width:15px;height:14px;background:#d5d6d8"></div><div class="a" style="left:123px;top:12px;width:15px;height:14px;background:#e0e1e3"></div><div class="a" style="left:138px;top:12px;width:15px;height:14px;background:#d2d3d5"></div><div class="a" style="left:153px;top:12px;width:15px;height:14px;background:#dcdddf"></div><div class="a" style="left:168px;top:12px;width:15px;height:14px;background:#e3e4e6"></div><div class="a" style="left:183px;top:12px;width:15px;height:14px;background:#dfe0e2"></div><div class="a" style="left:198px;top:12px;width:15px;height:14px;background:#dadbdd"></div><div class="a" style="left:213px;top:12px;width:15px;height:14px;background:#e5e6e8"></div><div class="a" style="left:228px;top:12px;width:7px;height:14px;background:#d6d7d9"></div></div>
<div class="a" style="left:339px;top:1122px;font-size:18px;line-height:22px;color:#333;white-space:nowrap">...</div>
<svg class="a" style="left:83px;top:1160px" width="18" height="21" viewBox="0 0 18 21"><path d="M8.3 0C6.6 0 5.8 1.5 5.8 3.3C5.8 5.5 4.6 7.8 3.6 10.5C2.8 12.8 2.2 15 2.4 17.5L2.6 19.8H14.6C15.2 17 15.5 14.5 14.8 12C14 9 11.8 5.8 11.8 3.6C11.8 1.5 10.4 0 8.3 0Z" fill="#151515"/><path d="M7.8 7.4C5.8 8.4 3.8 12 3.6 16.5L3.8 19.2H11.6C12.4 15 12 10.2 10.2 8C9.5 7.2 8.6 7.1 7.8 7.4Z" fill="#fff"/><circle cx="7.2" cy="3.4" r="0.9" fill="#fff"/><circle cx="9.6" cy="3.4" r="0.9" fill="#fff"/><ellipse cx="8.3" cy="6" rx="2.4" ry="1.4" fill="#f4a500"/><path d="M0 15.8L3.8 13.8L6.4 18.8L4.6 20.7L1.2 19.6Z" fill="#f4a500"/><path d="M17.2 16.8L13.4 14.6L10.8 19L12.6 20.8L16 19.8Z" fill="#f4a500"/></svg>
<div class="a" style="left:110px;top:1154px;width:225px;height:30px;border-radius:13px;overflow:hidden"><div class="a" style="left:0px;top:0px;width:10px;height:15px;background:#dfe0e2"></div><div class="a" style="left:10px;top:0px;width:15px;height:15px;background:#eeeff1"></div><div class="a" style="left:25px;top:0px;width:15px;height:15px;background:#f4f5f7"></div><div class="a" style="left:40px;top:0px;width:15px;height:15px;background:#e5e6e8"></div><div class="a" style="left:55px;top:0px;width:15px;height:15px;background:#e1e2e4"></div><div class="a" style="left:70px;top:0px;width:15px;height:15px;background:#e3e4e6"></div><div class="a" style="left:85px;top:0px;width:15px;height:15px;background:#e6e7e9"></div><div class="a" style="left:100px;top:0px;width:15px;height:15px;background:#dfe0e2"></div><div class="a" style="left:115px;top:0px;width:15px;height:15px;background:#e3e4e6"></div><div class="a" style="left:130px;top:0px;width:15px;height:15px;background:#e4e5e7"></div><div class="a" style="left:145px;top:0px;width:15px;height:15px;background:#e7e8ea"></div><div class="a" style="left:160px;top:0px;width:15px;height:15px;background:#f2f3f5"></div><div class="a" style="left:175px;top:0px;width:15px;height:15px;background:#e7e8ea"></div><div class="a" style="left:190px;top:0px;width:15px;height:15px;background:#eeeff1"></div><div class="a" style="left:205px;top:0px;width:15px;height:15px;background:#e4e5e7"></div><div class="a" style="left:220px;top:0px;width:5px;height:15px;background:#e7e8ea"></div><div class="a" style="left:0px;top:15px;width:10px;height:15px;background:#fafbfd"></div><div class="a" style="left:10px;top:15px;width:15px;height:15px;background:#fcfdff"></div><div class="a" style="left:25px;top:15px;width:15px;height:15px;background:#f1f2f4"></div><div class="a" style="left:40px;top:15px;width:15px;height:15px;background:#f4f5f7"></div><div class="a" style="left:55px;top:15px;width:15px;height:15px;background:#f7f8fa"></div><div class="a" style="left:70px;top:15px;width:15px;height:15px;background:#ecedef"></div><div class="a" style="left:85px;top:15px;width:15px;height:15px;background:#f4f5f7"></div><div class="a" style="left:100px;top:15px;width:15px;height:15px;background:#edeef0"></div><div class="a" style="left:115px;top:15px;width:15px;height:15px;background:#ecedef"></div><div class="a" style="left:130px;top:15px;width:15px;height:15px;background:#ecedef"></div><div class="a" style="left:145px;top:15px;width:15px;height:15px;background:#fcfdff"></div><div class="a" style="left:160px;top:15px;width:15px;height:15px;background:#fdfeff"></div><div class="a" style="left:175px;top:15px;width:15px;height:15px;background:#f2f3f5"></div><div class="a" style="left:190px;top:15px;width:15px;height:15px;background:#fcfdff"></div><div class="a" style="left:205px;top:15px;width:15px;height:15px;background:#fbfcfe"></div><div class="a" style="left:220px;top:15px;width:5px;height:15px;background:#f3f4f6"></div></div>
<div class="a" style="left:337px;top:1161px;font-size:18px;line-height:22px;color:#333;white-space:nowrap">...</div>
<svg class="a" style="left:83px;top:1199px" width="18" height="21" viewBox="0 0 18 21"><path d="M8.3 0C6.6 0 5.8 1.5 5.8 3.3C5.8 5.5 4.6 7.8 3.6 10.5C2.8 12.8 2.2 15 2.4 17.5L2.6 19.8H14.6C15.2 17 15.5 14.5 14.8 12C14 9 11.8 5.8 11.8 3.6C11.8 1.5 10.4 0 8.3 0Z" fill="#151515"/><path d="M7.8 7.4C5.8 8.4 3.8 12 3.6 16.5L3.8 19.2H11.6C12.4 15 12 10.2 10.2 8C9.5 7.2 8.6 7.1 7.8 7.4Z" fill="#fff"/><circle cx="7.2" cy="3.4" r="0.9" fill="#fff"/><circle cx="9.6" cy="3.4" r="0.9" fill="#fff"/><ellipse cx="8.3" cy="6" rx="2.4" ry="1.4" fill="#f4a500"/><path d="M0 15.8L3.8 13.8L6.4 18.8L4.6 20.7L1.2 19.6Z" fill="#f4a500"/><path d="M17.2 16.8L13.4 14.6L10.8 19L12.6 20.8L16 19.8Z" fill="#f4a500"/></svg>
<div class="a" style="left:111px;top:1199px;width:220px;height:16px;border-radius:13px;overflow:hidden"><div class="a" style="left:0px;top:0px;width:9px;height:16px;background:#e0e1e3"></div><div class="a" style="left:9px;top:0px;width:15px;height:16px;background:#d5d6d8"></div><div class="a" style="left:24px;top:0px;width:15px;height:16px;background:#e7e8ea"></div><div class="a" style="left:39px;top:0px;width:15px;height:16px;background:#e6e7e9"></div><div class="a" style="left:54px;top:0px;width:15px;height:16px;background:#dfe0e2"></div><div class="a" style="left:69px;top:0px;width:15px;height:16px;background:#e7e8ea"></div><div class="a" style="left:84px;top:0px;width:15px;height:16px;background:#e1e2e4"></div><div class="a" style="left:99px;top:0px;width:15px;height:16px;background:#e3e4e6"></div><div class="a" style="left:114px;top:0px;width:15px;height:16px;background:#dedfe1"></div><div class="a" style="left:129px;top:0px;width:15px;height:16px;background:#e2e3e5"></div><div class="a" style="left:144px;top:0px;width:15px;height:16px;background:#dbdcde"></div><div class="a" style="left:159px;top:0px;width:15px;height:16px;background:#e8e9eb"></div><div class="a" style="left:174px;top:0px;width:15px;height:16px;background:#d8d9db"></div><div class="a" style="left:189px;top:0px;width:15px;height:16px;background:#d9dadc"></div><div class="a" style="left:204px;top:0px;width:15px;height:16px;background:#dcdddf"></div><div class="a" style="left:219px;top:0px;width:1px;height:16px;background:#d8d9db"></div></div>
<div class="a" style="left:333px;top:1200px;font-size:18px;line-height:22px;color:#333;white-space:nowrap">..</div>
<svg class="a" style="left:83px;top:1237px" width="18" height="21" viewBox="0 0 18 21"><path d="M8.3 0C6.6 0 5.8 1.5 5.8 3.3C5.8 5.5 4.6 7.8 3.6 10.5C2.8 12.8 2.2 15 2.4 17.5L2.6 19.8H14.6C15.2 17 15.5 14.5 14.8 12C14 9 11.8 5.8 11.8 3.6C11.8 1.5 10.4 0 8.3 0Z" fill="#151515"/><path d="M7.8 7.4C5.8 8.4 3.8 12 3.6 16.5L3.8 19.2H11.6C12.4 15 12 10.2 10.2 8C9.5 7.2 8.6 7.1 7.8 7.4Z" fill="#fff"/><circle cx="7.2" cy="3.4" r="0.9" fill="#fff"/><circle cx="9.6" cy="3.4" r="0.9" fill="#fff"/><ellipse cx="8.3" cy="6" rx="2.4" ry="1.4" fill="#f4a500"/><path d="M0 15.8L3.8 13.8L6.4 18.8L4.6 20.7L1.2 19.6Z" fill="#f4a500"/><path d="M17.2 16.8L13.4 14.6L10.8 19L12.6 20.8L16 19.8Z" fill="#f4a500"/></svg>
<div class="a" style="left:102px;top:1231px;width:229px;height:27px;border-radius:13px;overflow:hidden"><div class="a" style="left:0px;top:0px;width:3px;height:13px;background:#f0f1f3"></div><div class="a" style="left:3px;top:0px;width:15px;height:13px;background:#f8f9fb"></div><div class="a" style="left:18px;top:0px;width:15px;height:13px;background:#f7f8fa"></div><div class="a" style="left:33px;top:0px;width:15px;height:13px;background:#edeef0"></div><div class="a" style="left:48px;top:0px;width:15px;height:13px;background:#f0f1f3"></div><div class="a" style="left:63px;top:0px;width:15px;height:13px;background:#ecedef"></div><div class="a" style="left:78px;top:0px;width:15px;height:13px;background:#eeeff1"></div><div class="a" style="left:93px;top:0px;width:15px;height:13px;background:#f4f5f7"></div><div class="a" style="left:108px;top:0px;width:15px;height:13px;background:#f9fafc"></div><div class="a" style="left:123px;top:0px;width:15px;height:13px;background:#f1f2f4"></div><div class="a" style="left:138px;top:0px;width:15px;height:13px;background:#edeef0"></div><div class="a" style="left:153px;top:0px;width:15px;height:13px;background:#eeeff1"></div><div class="a" style="left:168px;top:0px;width:15px;height:13px;background:#f8f9fb"></div><div class="a" style="left:183px;top:0px;width:15px;height:13px;background:#fcfdff"></div><div class="a" style="left:198px;top:0px;width:15px;height:13px;background:#f5f6f8"></div><div class="a" style="left:213px;top:0px;width:15px;height:13px;background:#f3f4f6"></div><div class="a" style="left:228px;top:0px;width:1px;height:13px;background:#f5f6f8"></div><div class="a" style="left:0px;top:13px;width:3px;height:14px;background:#dfe0e2"></div><div class="a" style="left:3px;top:13px;width:15px;height:14px;background:#ecedef"></div><div class="a" style="left:18px;top:13px;width:15px;height:14px;background:#e3e4e6"></div><div class="a" style="left:33px;top:13px;width:15px;height:14px;background:#e3e4e6"></div><div class="a" style="left:48px;top:13px;width:15px;height:14px;background:#e6e7e9"></div><div class="a" style="left:63px;top:13px;width:15px;height:14px;background:#ecedef"></div><div class="a" style="left:78px;top:13px;width:15px;height:14px;background:#dedfe1"></div><div class="a" style="left:93px;top:13px;width:15px;height:14px;background:#e6e7e9"></div><div class="a" style="left:108px;top:13px;width:15px;height:14px;background:#e9eaec"></div><div class="a" style="left:123px;top:13px;width:15px;height:14px;background:#e8e9eb"></div><div class="a" style="left:138px;top:13px;width:15px;height:14px;background:#eff0f2"></div><div class="a" style="left:153px;top:13px;width:15px;height:14px;background:#e8e9eb"></div><div class="a" style="left:168px;top:13px;width:15px;height:14px;background:#e5e6e8"></div><div class="a" style="left:183px;top:13px;width:15px;height:14px;background:#dfe0e2"></div><div class="a" style="left:198px;top:13px;width:15px;height:14px;background:#e7e8ea"></div><div class="a" style="left:213px;top:13px;width:15px;height:14px;background:#e4e5e7"></div><div class="a" style="left:228px;top:13px;width:1px;height:14px;background:#e9eaec"></div></div>
<div class="a" style="left:333px;top:1238px;font-size:18px;line-height:22px;color:#333;white-space:nowrap">...</div>
<svg class="a" style="left:83px;top:1277px" width="18" height="21" viewBox="0 0 18 21"><path d="M8.3 0C6.6 0 5.8 1.5 5.8 3.3C5.8 5.5 4.6 7.8 3.6 10.5C2.8 12.8 2.2 15 2.4 17.5L2.6 19.8H14.6C15.2 17 15.5 14.5 14.8 12C14 9 11.8 5.8 11.8 3.6C11.8 1.5 10.4 0 8.3 0Z" fill="#151515"/><path d="M7.8 7.4C5.8 8.4 3.8 12 3.6 16.5L3.8 19.2H11.6C12.4 15 12 10.2 10.2 8C9.5 7.2 8.6 7.1 7.8 7.4Z" fill="#fff"/><circle cx="7.2" cy="3.4" r="0.9" fill="#fff"/><circle cx="9.6" cy="3.4" r="0.9" fill="#fff"/><ellipse cx="8.3" cy="6" rx="2.4" ry="1.4" fill="#f4a500"/><path d="M0 15.8L3.8 13.8L6.4 18.8L4.6 20.7L1.2 19.6Z" fill="#f4a500"/><path d="M17.2 16.8L13.4 14.6L10.8 19L12.6 20.8L16 19.8Z" fill="#f4a500"/></svg>
<div class="a" style="left:102px;top:1274px;width:225px;height:26px;border-radius:13px;overflow:hidden"><div class="a" style="left:0px;top:0px;width:3px;height:13px;background:#e3e4e6"></div><div class="a" style="left:3px;top:0px;width:15px;height:13px;background:#dedfe1"></div><div class="a" style="left:18px;top:0px;width:15px;height:13px;background:#e8e9eb"></div><div class="a" style="left:33px;top:0px;width:15px;height:13px;background:#eaebed"></div><div class="a" style="left:48px;top:0px;width:15px;height:13px;background:#e0e1e3"></div><div class="a" style="left:63px;top:0px;width:15px;height:13px;background:#edeef0"></div><div class="a" style="left:78px;top:0px;width:15px;height:13px;background:#e6e7e9"></div><div class="a" style="left:93px;top:0px;width:15px;height:13px;background:#eeeff1"></div><div class="a" style="left:108px;top:0px;width:15px;height:13px;background:#f2f3f5"></div><div class="a" style="left:123px;top:0px;width:15px;height:13px;background:#e4e5e7"></div><div class="a" style="left:138px;top:0px;width:15px;height:13px;background:#e5e6e8"></div><div class="a" style="left:153px;top:0px;width:15px;height:13px;background:#eeeff1"></div><div class="a" style="left:168px;top:0px;width:15px;height:13px;background:#dedfe1"></div><div class="a" style="left:183px;top:0px;width:15px;height:13px;background:#e0e1e3"></div><div class="a" style="left:198px;top:0px;width:15px;height:13px;background:#e6e7e9"></div><div class="a" style="left:213px;top:0px;width:12px;height:13px;background:#e0e1e3"></div><div class="a" style="left:0px;top:13px;width:3px;height:13px;background:#f0f1f3"></div><div class="a" style="left:3px;top:13px;width:15px;height:13px;background:#f8f9fb"></div><div class="a" style="left:18px;top:13px;width:15px;height:13px;background:#edeef0"></div><div class="a" style="left:33px;top:13px;width:15px;height:13px;background:#f8f9fb"></div><div class="a" style="left:48px;top:13px;width:15px;height:13px;background:#ecedef"></div><div class="a" style="left:63px;top:13px;width:15px;height:13px;background:#f5f6f8"></div><div class="a" style="left:78px;top:13px;width:15px;height:13px;background:#f5f6f8"></div><div class="a" style="left:93px;top:13px;width:15px;height:13px;background:#f3f4f6"></div><div class="a" style="left:108px;top:13px;width:15px;height:13px;background:#eeeff1"></div><div class="a" style="left:123px;top:13px;width:15px;height:13px;background:#fcfdff"></div><div class="a" style="left:138px;top:13px;width:15px;height:13px;background:#f0f1f3"></div><div class="a" style="left:153px;top:13px;width:15px;height:13px;background:#f8f9fb"></div><div class="a" style="left:168px;top:13px;width:15px;height:13px;background:#f6f7f9"></div><div class="a" style="left:183px;top:13px;width:15px;height:13px;background:#fbfcfe"></div><div class="a" style="left:198px;top:13px;width:15px;height:13px;background:#f0f1f3"></div><div class="a" style="left:213px;top:13px;width:12px;height:13px;background:#f5f6f8"></div></div>
<div class="a" style="left:325px;top:1278px;font-size:18px;line-height:22px;color:#333;white-space:nowrap">1...</div>
<svg class="a" style="left:83px;top:1316px" width="18" height="21" viewBox="0 0 18 21"><path d="M8.3 0C6.6 0 5.8 1.5 5.8 3.3C5.8 5.5 4.6 7.8 3.6 10.5C2.8 12.8 2.2 15 2.4 17.5L2.6 19.8H14.6C15.2 17 15.5 14.5 14.8 12C14 9 11.8 5.8 11.8 3.6C11.8 1.5 10.4 0 8.3 0Z" fill="#151515"/><path d="M7.8 7.4C5.8 8.4 3.8 12 3.6 16.5L3.8 19.2H11.6C12.4 15 12 10.2 10.2 8C9.5 7.2 8.6 7.1 7.8 7.4Z" fill="#fff"/><circle cx="7.2" cy="3.4" r="0.9" fill="#fff"/><circle cx="9.6" cy="3.4" r="0.9" fill="#fff"/><ellipse cx="8.3" cy="6" rx="2.4" ry="1.4" fill="#f4a500"/><path d="M0 15.8L3.8 13.8L6.4 18.8L4.6 20.7L1.2 19.6Z" fill="#f4a500"/><path d="M17.2 16.8L13.4 14.6L10.8 19L12.6 20.8L16 19.8Z" fill="#f4a500"/></svg>
<div class="a" style="left:100px;top:1310px;width:226px;height:25px;border-radius:13px;overflow:hidden"><div class="a" style="left:0px;top:0px;width:5px;height:12px;background:#f0f1f3"></div><div class="a" style="left:5px;top:0px;width:15px;height:12px;background:#edeef0"></div><div class="a" style="left:20px;top:0px;width:15px;height:12px;background:#fcfdff"></div><div class="a" style="left:35px;top:0px;width:15px;height:12px;background:#f9fafc"></div><div class="a" style="left:50px;top:0px;width:15px;height:12px;background:#fcfdff"></div><div class="a" style="left:65px;top:0px;width:15px;height:12px;background:#f0f1f3"></div><div class="a" style="left:80px;top:0px;width:15px;height:12px;background:#fcfdff"></div><div class="a" style="left:95px;top:0px;width:15px;height:12px;background:#fcfdff"></div><div class="a" style="left:110px;top:0px;width:15px;height:12px;background:#ecedef"></div><div class="a" style="left:125px;top:0px;width:15px;height:12px;background:#f3f4f6"></div><div class="a" style="left:140px;top:0px;width:15px;height:12px;background:#eeeff1"></div><div class="a" style="left:155px;top:0px;width:15px;height:12px;background:#ecedef"></div><div class="a" style="left:170px;top:0px;width:15px;height:12px;background:#edeef0"></div><div class="a" style="left:185px;top:0px;width:15px;height:12px;background:#f0f1f3"></div><div class="a" style="left:200px;top:0px;width:15px;height:12px;background:#f7f8fa"></div><div class="a" style="left:215px;top:0px;width:11px;height:12px;background:#eff0f2"></div><div class="a" style="left:0px;top:12px;width:5px;height:13px;background:#eaebed"></div><div class="a" style="left:5px;top:12px;width:15px;height:13px;background:#ecedef"></div><div class="a" style="left:20px;top:12px;width:15px;height:13px;background:#eff0f2"></div><div class="a" style="left:35px;top:12px;width:15px;height:13px;background:#dfe0e2"></div><div class="a" style="left:50px;top:12px;width:15px;height:13px;background:#f2f3f5"></div><div class="a" style="left:65px;top:12px;width:15px;height:13px;background:#dedfe1"></div><div class="a" style="left:80px;top:12px;width:15px;height:13px;background:#f2f3f5"></div><div class="a" style="left:95px;top:12px;width:15px;height:13px;background:#eff0f2"></div><div class="a" style="left:110px;top:12px;width:15px;height:13px;background:#f3f4f6"></div><div class="a" style="left:125px;top:12px;width:15px;height:13px;background:#e5e6e8"></div><div class="a" style="left:140px;top:12px;width:15px;height:13px;background:#edeef0"></div><div class="a" style="left:155px;top:12px;width:15px;height:13px;background:#e6e7e9"></div><div class="a" style="left:170px;top:12px;width:15px;height:13px;background:#dedfe1"></div><div class="a" style="left:185px;top:12px;width:15px;height:13px;background:#ecedef"></div><div class="a" style="left:200px;top:12px;width:15px;height:13px;background:#e0e1e3"></div><div class="a" style="left:215px;top:12px;width:11px;height:13px;background:#eeeff1"></div></div>
<div class="a" style="left:324px;top:1317px;font-size:18px;line-height:22px;color:#333;white-space:nowrap">5...</div>
<svg class="a" style="left:83px;top:1393px" width="18" height="21" viewBox="0 0 18 21"><path d="M8.3 0C6.6 0 5.8 1.5 5.8 3.3C5.8 5.5 4.6 7.8 3.6 10.5C2.8 12.8 2.2 15 2.4 17.5L2.6 19.8H14.6C15.2 17 15.5 14.5 14.8 12C14 9 11.8 5.8 11.8 3.6C11.8 1.5 10.4 0 8.3 0Z" fill="#151515"/><path d="M7.8 7.4C5.8 8.4 3.8 12 3.6 16.5L3.8 19.2H11.6C12.4 15 12 10.2 10.2 8C9.5 7.2 8.6 7.1 7.8 7.4Z" fill="#fff"/><circle cx="7.2" cy="3.4" r="0.9" fill="#fff"/><circle cx="9.6" cy="3.4" r="0.9" fill="#fff"/><ellipse cx="8.3" cy="6" rx="2.4" ry="1.4" fill="#f4a500"/><path d="M0 15.8L3.8 13.8L6.4 18.8L4.6 20.7L1.2 19.6Z" fill="#f4a500"/><path d="M17.2 16.8L13.4 14.6L10.8 19L12.6 20.8L16 19.8Z" fill="#f4a500"/></svg>
<div class="a" style="left:100px;top:1395px;width:200px;height:15px;border-radius:13px;overflow:hidden"><div class="a" style="left:0px;top:0px;width:5px;height:15px;background:#eff0f2"></div><div class="a" style="left:5px;top:0px;width:15px;height:15px;background:#e0e1e3"></div><div class="a" style="left:20px;top:0px;width:15px;height:15px;background:#f3f4f6"></div><div class="a" style="left:35px;top:0px;width:15px;height:15px;background:#eeeff1"></div><div class="a" style="left:50px;top:0px;width:15px;height:15px;background:#e0e1e3"></div><div class="a" style="left:65px;top:0px;width:15px;height:15px;background:#edeef0"></div><div class="a" style="left:80px;top:0px;width:15px;height:15px;background:#e6e7e9"></div><div class="a" style="left:95px;top:0px;width:15px;height:15px;background:#e0e1e3"></div><div class="a" style="left:110px;top:0px;width:15px;height:15px;background:#e6e7e9"></div><div class="a" style="left:125px;top:0px;width:15px;height:15px;background:#e5e6e8"></div><div class="a" style="left:140px;top:0px;width:15px;height:15px;background:#e4e5e7"></div><div class="a" style="left:155px;top:0px;width:15px;height:15px;background:#e5e6e8"></div><div class="a" style="left:170px;top:0px;width:15px;height:15px;background:#f2f3f5"></div><div class="a" style="left:185px;top:0px;width:15px;height:15px;background:#ecedef"></div></div>

<!-- terminal area -->
<div class="a" style="left:378px;top:69px;width:129px;height:42px;background:#424242"></div>
<div class="a" style="left:390px;top:83px;width:15px;height:15px;border-radius:50%;background:#2f9a1e"></div>
<div class="a" style="left:411px;top:79px;font-size:19px;line-height:24px;color:#fff">testest</div>
<svg class="a" style="left:472px;top:85px" width="15" height="15" viewBox="0 0 15 15"><path d="M1 1L14 14M14 1L1 14" stroke="#d4700a" stroke-width="2.4"/></svg>
<svg class="a" style="left:518px;top:80px" width="20" height="20" viewBox="0 0 20 20"><path d="M10 0V20M0 10H20" stroke="#1a73e8" stroke-width="1.6"/></svg>

<div class="a" style="left:378px;top:111px;width:1776px;height:1377px;background:#000"></div>
<div class="a" style="left:378px;top:1488px;width:1776px;height:36px;background:#1e1e1e"></div>
<svg class="a" style="left:385px;top:1496px" width="22" height="22" viewBox="0 0 22 22"><path d="M15.5 0.8l4.5 4.5-2 2-4.5-4.5z" fill="#1a73e8"/><path d="M12.6 3.7l4.5 4.5-9.6 9.3H1.5V12.6z" fill="#1a73e8"/><rect x="0" y="19.5" width="21" height="2" fill="#1a73e8"/></svg>
<div class="a" style="left:1980px;top:1491px;width:168px;height:31px;border:1px solid #cfcfcf;border-radius:4px"></div>
<div class="a" style="left:1990px;top:1498px;font-size:16px;line-height:20px;color:#f0f0f0;white-space:nowrap">Send out(Ctrl+Enter)</div>

<div style="position:absolute;left:390px;top:344px;width:1741px;height:29px;background:#4e9a06"></div>
<div style="position:absolute;left:988px;top:344px;width:65px;height:29px;background:#06989a"></div>
<div style="position:absolute;left:390px;top:373px;width:1741px;height:29px;background:#06989a"></div>
<div style="position:absolute;left:416px;top:1446px;width:78px;height:29px;background:#06989a"></div>
<div style="position:absolute;left:520px;top:1446px;width:78px;height:29px;background:#06989a"></div>
<div style="position:absolute;left:624px;top:1446px;width:78px;height:29px;background:#06989a"></div>
<div style="position:absolute;left:728px;top:1446px;width:78px;height:29px;background:#06989a"></div>
<div style="position:absolute;left:832px;top:1446px;width:78px;height:29px;background:#06989a"></div>
<div style="position:absolute;left:936px;top:1446px;width:78px;height:29px;background:#06989a"></div>
<div style="position:absolute;left:1040px;top:1446px;width:78px;height:29px;background:#06989a"></div>
<div style="position:absolute;left:1144px;top:1446px;width:78px;height:29px;background:#06989a"></div>
<div style="position:absolute;left:1248px;top:1446px;width:78px;height:29px;background:#06989a"></div>
<div style="position:absolute;left:1365px;top:1446px;width:766px;height:29px;background:#06989a"></div>
<svg class="a" style="left:1042px;top:348px" width="21" height="18" viewBox="0 0 21 18"><path d="M1 1.2H20M1 1.2L10.5 16.5L20 1.2" fill="none" stroke="#2e3436" stroke-width="1.1"/></svg>
<div class="tl" style="top:144px"><span style="color:#06989a">    0</span><span style="color:#ffffff;font-weight:bold">[</span><span style="color:#ffffff">                                                     </span><span style="color:#555753;font-weight:bold">0.0%</span><span style="color:#ffffff;font-weight:bold">]</span><span style="color:#ffffff">   </span><span style="color:#06989a">Tasks: </span><span style="color:#34e2e2;font-weight:bold">45</span><span style="color:#06989a">, </span><span style="color:#8ae234;font-weight:bold">56</span><span style="color:#4e9a06"> thr</span><span style="color:#06989a">; </span><span style="color:#8ae234;font-weight:bold">1</span><span style="color:#06989a"> running</span></div>
<div class="tl" style="top:173px"><span style="color:#06989a">    1</span><span style="color:#ffffff;font-weight:bold">[</span><span style="color:#4e9a06">|</span><span style="color:#ffffff">                                                    </span><span style="color:#555753;font-weight:bold">0.7%</span><span style="color:#ffffff;font-weight:bold">]</span><span style="color:#ffffff">   </span><span style="color:#06989a">Load average: </span><span style="color:#ffffff;font-weight:bold">0.56 </span><span style="color:#34e2e2;font-weight:bold">0.17 </span><span style="color:#06989a">0.10</span></div>
<div class="tl" style="top:202px"><span style="color:#06989a">    2</span><span style="color:#ffffff;font-weight:bold">[</span><span style="color:#ffffff">                                                     </span><span style="color:#555753;font-weight:bold">0.0%</span><span style="color:#ffffff;font-weight:bold">]</span><span style="color:#ffffff">   </span><span style="color:#06989a">Uptime: </span><span style="color:#34e2e2;font-weight:bold">4 days, 15:49:49</span></div>
<div class="tl" style="top:231px"><span style="color:#06989a">    3</span><span style="color:#ffffff;font-weight:bold">[</span><span style="color:#c4a000">|</span><span style="color:#ffffff">                                                    </span><span style="color:#555753;font-weight:bold">0.7%</span><span style="color:#ffffff;font-weight:bold">]</span></div>
<div class="tl" style="top:260px"><span style="color:#06989a">  Mem</span><span style="color:#ffffff;font-weight:bold">[</span><span style="color:#4e9a06">||||||||</span><span style="color:#3465a4">|</span><span style="color:#c4a000">||||||||||||||||||||||||||||||||||||||</span><span style="color:#c4a000">534</span><span style="color:#555753;font-weight:bold">M/3.83G</span><span style="color:#ffffff;font-weight:bold">]</span></div>
<div class="tl" style="top:289px"><span style="color:#06989a">  Swp</span><span style="color:#ffffff;font-weight:bold">[</span><span style="color:#cc0000">|</span><span style="color:#ffffff">                                             </span><span style="color:#555753;font-weight:bold">1.55M/3.83G</span><span style="color:#ffffff;font-weight:bold">]</span></div>
<div class="tl" style="top:347px"><span style="color:#2e3436">    PID USER      PRI  NI  VIRT   RES   SHR S CPU% MEM%   TIME+  Command</span></div>
<div class="tl" style="top:376px"><span style="color:#2e3436"> 377119 root       20   0 17456 11604  8932 S  0.7  0.3  0:00.13 sshd: root@notty</span></div>
<div class="tl" style="top:405px"><span style="color:#ffffff"> 377286 </span><span style="color:#ffffff">root     </span><span style="color:#ffffff">  20   0 </span><span style="color:#ffffff"> </span><span style="color:#06989a">8</span><span style="color:#ffffff">588</span><span style="color:#ffffff"> </span><span style="color:#ffffff"> </span><span style="color:#06989a">4</span><span style="color:#ffffff">884</span><span style="color:#ffffff"> </span><span style="color:#ffffff"> </span><span style="color:#06989a">3</span><span style="color:#ffffff">668</span><span style="color:#ffffff"> </span><span style="color:#4e9a06">R</span><span style="color:#ffffff">  0.7  0.1  0:00.07 </span><span style="color:#ffffff">htop</span></div>
<div class="tl" style="top:434px"><span style="color:#ffffff">      1 </span><span style="color:#ffffff">root     </span><span style="color:#ffffff">  20   0 </span><span style="color:#ffffff"> </span><span style="color:#06989a">163M</span><span style="color:#ffffff"> </span><span style="color:#06989a">13</span><span style="color:#ffffff">428</span><span style="color:#ffffff"> </span><span style="color:#ffffff"> </span><span style="color:#06989a">8</span><span style="color:#ffffff">536</span><span style="color:#ffffff"> </span><span style="color:#ffffff">S</span><span style="color:#ffffff">  0.0  0.3  1:06.74 </span><span style="color:#ffffff">/lib/systemd/systemd --system --deserialize 51</span></div>
<div class="tl" style="top:463px"><span style="color:#ffffff">    664 </span><span style="color:#ffffff">root     </span><span style="color:#ffffff">  20   0 </span><span style="color:#ffffff"> </span><span style="color:#06989a">6</span><span style="color:#ffffff">892</span><span style="color:#ffffff"> </span><span style="color:#ffffff"> </span><span style="color:#06989a">2</span><span style="color:#ffffff">920</span><span style="color:#ffffff"> </span><span style="color:#ffffff"> </span><span style="color:#06989a">2</span><span style="color:#ffffff">676</span><span style="color:#ffffff"> </span><span style="color:#ffffff">S</span><span style="color:#ffffff">  0.0  0.1  0:01.00 </span><span style="color:#ffffff">/usr/sbin/cron -f -P</span></div>
<div class="tl" style="top:492px"><span style="color:#ffffff">    666 </span><span style="color:#555753;font-weight:bold">messagebu</span><span style="color:#ffffff">  20   0 </span><span style="color:#ffffff"> </span><span style="color:#06989a">9</span><span style="color:#ffffff">104</span><span style="color:#ffffff"> </span><span style="color:#ffffff"> </span><span style="color:#06989a">5</span><span style="color:#ffffff">020</span><span style="color:#ffffff"> </span><span style="color:#ffffff"> </span><span style="color:#06989a">3</span><span style="color:#ffffff">892</span><span style="color:#ffffff"> </span><span style="color:#ffffff">S</span><span style="color:#ffffff">  0.0  0.1  0:08.23 </span><span style="color:#ffffff">@dbus-daemon --system --address=systemd: --nofork --nopidfile --syste</span></div>
<div class="tl" style="top:521px"><span style="color:#ffffff">    672 </span><span style="color:#ffffff">root     </span><span style="color:#ffffff">  20   0 </span><span style="color:#06989a">82</span><span style="color:#ffffff">764</span><span style="color:#ffffff"> </span><span style="color:#ffffff"> </span><span style="color:#06989a">4</span><span style="color:#ffffff">012</span><span style="color:#ffffff"> </span><span style="color:#ffffff"> </span><span style="color:#06989a">3</span><span style="color:#ffffff">664</span><span style="color:#ffffff"> </span><span style="color:#ffffff">S</span><span style="color:#ffffff">  0.0  0.1  0:17.85 </span><span style="color:#ffffff">/usr/sbin/irqbalance --foreground</span></div>
<div class="tl" style="top:550px"><span style="color:#ffffff">    673 </span><span style="color:#ffffff">root     </span><span style="color:#ffffff">  20   0 </span><span style="color:#06989a">32</span><span style="color:#ffffff">772</span><span style="color:#ffffff"> </span><span style="color:#06989a">18</span><span style="color:#ffffff">192</span><span style="color:#ffffff"> </span><span style="color:#ffffff"> </span><span style="color:#06989a">9</span><span style="color:#ffffff">548</span><span style="color:#ffffff"> </span><span style="color:#ffffff">S</span><span style="color:#ffffff">  0.0  0.5  0:00.17 </span><span style="color:#ffffff">/usr/bin/python3 /usr/bin/networkd-dispatcher --run-startup-triggers</span></div>
<div class="tl" style="top:579px"><span style="color:#ffffff">    674 </span><span style="color:#ffffff">root     </span><span style="color:#ffffff">  20   0 </span><span style="color:#ffffff"> </span><span style="color:#06989a">228M</span><span style="color:#ffffff"> </span><span style="color:#ffffff"> </span><span style="color:#06989a">7</span><span style="color:#ffffff">380</span><span style="color:#ffffff"> </span><span style="color:#ffffff"> </span><span style="color:#06989a">6</span><span style="color:#ffffff">544</span><span style="color:#ffffff"> </span><span style="color:#ffffff">S</span><span style="color:#ffffff">  0.0  0.2  0:00.79 </span><span style="color:#ffffff">/usr/libexec/polkitd --no-debug</span></div>
<div class="tl" style="top:608px"><span style="color:#ffffff">    679 </span><span style="color:#ffffff">root     </span><span style="color:#ffffff">  20   0 </span><span style="color:#ffffff"> </span><span style="color:#06989a">228M</span><span style="color:#ffffff"> </span><span style="color:#ffffff"> </span><span style="color:#06989a">7</span><span style="color:#ffffff">380</span><span style="color:#ffffff"> </span><span style="color:#ffffff"> </span><span style="color:#06989a">6</span><span style="color:#ffffff">544</span><span style="color:#ffffff"> </span><span style="color:#ffffff">S</span><span style="color:#ffffff">  0.0  0.2  0:00.00 </span><span style="color:#4e9a06">/usr/libexec/polkitd --no-debug</span></div>
<div class="tl" style="top:637px"><span style="color:#ffffff">    682 </span><span style="color:#ffffff">root     </span><span style="color:#ffffff">  20   0 </span><span style="color:#06989a">82</span><span style="color:#ffffff">764</span><span style="color:#ffffff"> </span><span style="color:#ffffff"> </span><span style="color:#06989a">4</span><span style="color:#ffffff">012</span><span style="color:#ffffff"> </span><span style="color:#ffffff"> </span><span style="color:#06989a">3</span><span style="color:#ffffff">664</span><span style="color:#ffffff"> </span><span style="color:#ffffff">S</span><span style="color:#ffffff">  0.0  0.1  0:00.00 </span><span style="color:#4e9a06">/usr/sbin/irqbalance --foreground</span></div>
<div class="tl" style="top:666px"><span style="color:#ffffff">    683 </span><span style="color:#ffffff">root     </span><span style="color:#ffffff">  20   0 </span><span style="color:#ffffff"> </span><span style="color:#06989a">228M</span><span style="color:#ffffff"> </span><span style="color:#ffffff"> </span><span style="color:#06989a">7</span><span style="color:#ffffff">380</span><span style="color:#ffffff"> </span><span style="color:#ffffff"> </span><span style="color:#06989a">6</span><span style="color:#ffffff">544</span><span style="color:#ffffff"> </span><span style="color:#ffffff">S</span><span style="color:#ffffff">  0.0  0.2  0:00.52 </span><span style="color:#4e9a06">/usr/libexec/polkitd --no-debug</span></div>
<div class="tl" style="top:695px"><span style="color:#ffffff">    684 </span><span style="color:#ffffff">root     </span><span style="color:#ffffff">  20   0 </span><span style="color:#06989a">32</span><span style="color:#ffffff">952</span><span style="color:#ffffff"> </span><span style="color:#ffffff"> </span><span style="color:#06989a">8</span><span style="color:#ffffff">500</span><span style="color:#ffffff"> </span><span style="color:#ffffff"> </span><span style="color:#06989a">6</span><span style="color:#ffffff">440</span><span style="color:#ffffff"> </span><span style="color:#ffffff">S</span><span style="color:#ffffff">  0.0  0.2  0:03.18 </span><span style="color:#ffffff">/lib/systemd/systemd-logind</span></div>
<div class="tl" style="top:724px"><span style="color:#ffffff">    686 </span><span style="color:#ffffff">root     </span><span style="color:#ffffff">  20   0 </span><span style="color:#ffffff"> </span><span style="color:#06989a">383M</span><span style="color:#ffffff"> </span><span style="color:#06989a">12</span><span style="color:#ffffff">836</span><span style="color:#ffffff"> </span><span style="color:#06989a">10</span><span style="color:#ffffff">628</span><span style="color:#ffffff"> </span><span style="color:#ffffff">S</span><span style="color:#ffffff">  0.0  0.3  0:01.21 </span><span style="color:#ffffff">/usr/libexec/udisks2/udisksd</span></div>
<div class="tl" style="top:753px"><span style="color:#ffffff">    708 </span><span style="color:#ffffff">root     </span><span style="color:#ffffff">  20   0 </span><span style="color:#ffffff"> </span><span style="color:#06989a">383M</span><span style="color:#ffffff"> </span><span style="color:#06989a">12</span><span style="color:#ffffff">836</span><span style="color:#ffffff"> </span><span style="color:#06989a">10</span><span style="color:#ffffff">628</span><span style="color:#ffffff"> </span><span style="color:#ffffff">S</span><span style="color:#ffffff">  0.0  0.3  0:00.04 </span><span style="color:#4e9a06">/usr/libexec/udisks2/udisksd</span></div>
<div class="tl" style="top:782px"><span style="color:#ffffff">    712 </span><span style="color:#ffffff">root     </span><span style="color:#ffffff">  20   0 </span><span style="color:#ffffff"> </span><span style="color:#06989a">383M</span><span style="color:#ffffff"> </span><span style="color:#06989a">12</span><span style="color:#ffffff">836</span><span style="color:#ffffff"> </span><span style="color:#06989a">10</span><span style="color:#ffffff">628</span><span style="color:#ffffff"> </span><span style="color:#ffffff">S</span><span style="color:#ffffff">  0.0  0.3  0:00.19 </span><span style="color:#4e9a06">/usr/libexec/udisks2/udisksd</span></div>
<div class="tl" style="top:811px"><span style="color:#ffffff">    716 </span><span style="color:#ffffff">root     </span><span style="color:#ffffff">  20   0 </span><span style="color:#ffffff"> </span><span style="color:#06989a">309M</span><span style="color:#ffffff"> </span><span style="color:#06989a">11</span><span style="color:#ffffff">832</span><span style="color:#ffffff"> </span><span style="color:#ffffff"> </span><span style="color:#06989a">9</span><span style="color:#ffffff">988</span><span style="color:#ffffff"> </span><span style="color:#ffffff">S</span><span style="color:#ffffff">  0.0  0.3  0:00.38 </span><span style="color:#ffffff">/usr/sbin/ModemManager</span></div>
<div class="tl" style="top:840px"><span style="color:#ffffff">    724 </span><span style="color:#ffffff">root     </span><span style="color:#ffffff">  20   0 </span><span style="color:#ffffff"> </span><span style="color:#06989a">7</span><span style="color:#ffffff">672</span><span style="color:#ffffff"> </span><span style="color:#ffffff"> </span><span style="color:#06989a">3</span><span style="color:#ffffff">736</span><span style="color:#ffffff"> </span><span style="color:#ffffff"> </span><span style="color:#06989a">2</span><span style="color:#ffffff">844</span><span style="color:#ffffff"> </span><span style="color:#ffffff">S</span><span style="color:#ffffff">  0.0  0.1  0:00.08 </span><span style="color:#ffffff">/bin/login -p --</span></div>
<div class="tl" style="top:869px"><span style="color:#ffffff">    727 </span><span style="color:#ffffff">root     </span><span style="color:#ffffff">  20   0 </span><span style="color:#ffffff"> </span><span style="color:#06989a">107M</span><span style="color:#ffffff"> </span><span style="color:#06989a">20</span><span style="color:#ffffff">668</span><span style="color:#ffffff"> </span><span style="color:#06989a">12</span><span style="color:#ffffff">524</span><span style="color:#ffffff"> </span><span style="color:#ffffff">S</span><span style="color:#ffffff">  0.0  0.5  0:00.17 </span><span style="color:#ffffff">/usr/bin/python3 /usr/share/unattended-upgrades/unattended-upgrade-sh</span></div>
<div class="tl" style="top:898px"><span style="color:#ffffff">    728 </span><span style="color:#ffffff">root     </span><span style="color:#ffffff">  20   0 </span><span style="color:#ffffff"> </span><span style="color:#06989a">383M</span><span style="color:#ffffff"> </span><span style="color:#06989a">12</span><span style="color:#ffffff">836</span><span style="color:#ffffff"> </span><span style="color:#06989a">10</span><span style="color:#ffffff">628</span><span style="color:#ffffff"> </span><span style="color:#ffffff">S</span><span style="color:#ffffff">  0.0  0.3  0:00.00 </span><span style="color:#4e9a06">/usr/libexec/udisks2/udisksd</span></div>
<div class="tl" style="top:927px"><span style="color:#ffffff">    731 </span><span style="color:#ffffff">root     </span><span style="color:#ffffff">  20   0 </span><span style="color:#ffffff"> </span><span style="color:#06989a">309M</span><span style="color:#ffffff"> </span><span style="color:#06989a">11</span><span style="color:#ffffff">832</span><span style="color:#ffffff"> </span><span style="color:#ffffff"> </span><span style="color:#06989a">9</span><span style="color:#ffffff">988</span><span style="color:#ffffff"> </span><span style="color:#ffffff">S</span><span style="color:#ffffff">  0.0  0.3  0:00.00 </span><span style="color:#4e9a06">/usr/sbin/ModemManager</span></div>
<div class="tl" style="top:956px"><span style="color:#ffffff">    734 </span><span style="color:#ffffff">root     </span><span style="color:#ffffff">  20   0 </span><span style="color:#ffffff"> </span><span style="color:#06989a">309M</span><span style="color:#ffffff"> </span><span style="color:#06989a">11</span><span style="color:#ffffff">832</span><span style="color:#ffffff"> </span><span style="color:#ffffff"> </span><span style="color:#06989a">9</span><span style="color:#ffffff">988</span><span style="color:#ffffff"> </span><span style="color:#ffffff">S</span><span style="color:#ffffff">  0.0  0.3  0:00.16 </span><span style="color:#4e9a06">/usr/sbin/ModemManager</span></div>
<div class="tl" style="top:985px"><span style="color:#ffffff">    780 </span><span style="color:#ffffff">root     </span><span style="color:#ffffff">  20   0 </span><span style="color:#ffffff"> </span><span style="color:#06989a">383M</span><span style="color:#ffffff"> </span><span style="color:#06989a">12</span><span style="color:#ffffff">836</span><span style="color:#ffffff"> </span><span style="color:#06989a">10</span><span style="color:#ffffff">628</span><span style="color:#ffffff"> </span><span style="color:#ffffff">S</span><span style="color:#ffffff">  0.0  0.3  0:00.00 </span><span style="color:#4e9a06">/usr/libexec/udisks2/udisksd</span></div>
<div class="tl" style="top:1014px"><span style="color:#ffffff">    791 </span><span style="color:#ffffff">root     </span><span style="color:#ffffff">  20   0 </span><span style="color:#ffffff"> </span><span style="color:#06989a">107M</span><span style="color:#ffffff"> </span><span style="color:#06989a">20</span><span style="color:#ffffff">668</span><span style="color:#ffffff"> </span><span style="color:#06989a">12</span><span style="color:#ffffff">524</span><span style="color:#ffffff"> </span><span style="color:#ffffff">S</span><span style="color:#ffffff">  0.0  0.5  0:00.00 </span><span style="color:#4e9a06">/usr/bin/python3 /usr/share/unattended-upgrades/unattended-upgrade-sh</span></div>
<div class="tl" style="top:1043px"><span style="color:#ffffff">    987 </span><span style="color:#ffffff">root     </span><span style="color:#ffffff">  20   0 </span><span style="color:#06989a">17</span><span style="color:#ffffff">072</span><span style="color:#ffffff"> </span><span style="color:#ffffff"> </span><span style="color:#06989a">9</span><span style="color:#ffffff">560</span><span style="color:#ffffff"> </span><span style="color:#ffffff"> </span><span style="color:#06989a">7</span><span style="color:#ffffff">964</span><span style="color:#ffffff"> </span><span style="color:#ffffff">S</span><span style="color:#ffffff">  0.0  0.2  0:00.31 </span><span style="color:#ffffff">/lib/systemd/systemd --user</span></div>
<div class="tl" style="top:1072px"><span style="color:#ffffff">    988 </span><span style="color:#ffffff">root     </span><span style="color:#ffffff">  20   0 </span><span style="color:#ffffff"> </span><span style="color:#06989a">101M</span><span style="color:#ffffff"> </span><span style="color:#ffffff"> </span><span style="color:#06989a">3</span><span style="color:#ffffff">436</span><span style="color:#ffffff"> </span><span style="color:#ffffff">    </span><span style="color:#ffffff">4</span><span style="color:#ffffff"> </span><span style="color:#ffffff">S</span><span style="color:#ffffff">  0.0  0.1  0:00.00 </span><span style="color:#ffffff">(sd-pam)</span></div>
<div class="tl" style="top:1101px"><span style="color:#ffffff">    996 </span><span style="color:#ffffff">root     </span><span style="color:#ffffff">  20   0 </span><span style="color:#ffffff"> </span><span style="color:#06989a">8</span><span style="color:#ffffff">664</span><span style="color:#ffffff"> </span><span style="color:#ffffff"> </span><span style="color:#06989a">4</span><span style="color:#ffffff">296</span><span style="color:#ffffff"> </span><span style="color:#ffffff"> </span><span style="color:#06989a">2</span><span style="color:#ffffff">580</span><span style="color:#ffffff"> </span><span style="color:#ffffff">S</span><span style="color:#ffffff">  0.0  0.1  0:00.03 </span><span style="color:#ffffff">-bash</span></div>
<div class="tl" style="top:1130px"><span style="color:#ffffff">   1307 </span><span style="color:#ffffff">root     </span><span style="color:#ffffff">  20   0 </span><span style="color:#ffffff"> </span><span style="color:#06989a">288M</span><span style="color:#ffffff"> </span><span style="color:#06989a">18</span><span style="color:#ffffff">324</span><span style="color:#ffffff"> </span><span style="color:#06989a">15</span><span style="color:#ffffff">416</span><span style="color:#ffffff"> </span><span style="color:#ffffff">S</span><span style="color:#ffffff">  0.0  0.5  0:04.38 </span><span style="color:#ffffff">/usr/libexec/packagekitd</span></div>
<div class="tl" style="top:1159px"><span style="color:#ffffff">   1308 </span><span style="color:#ffffff">root     </span><span style="color:#ffffff">  20   0 </span><span style="color:#ffffff"> </span><span style="color:#06989a">288M</span><span style="color:#ffffff"> </span><span style="color:#06989a">18</span><span style="color:#ffffff">324</span><span style="color:#ffffff"> </span><span style="color:#06989a">15</span><span style="color:#ffffff">416</span><span style="color:#ffffff"> </span><span style="color:#ffffff">S</span><span style="color:#ffffff">  0.0  0.5  0:00.00 </span><span style="color:#4e9a06">/usr/libexec/packagekitd</span></div>
<div class="tl" style="top:1188px"><span style="color:#ffffff">   1309 </span><span style="color:#ffffff">root     </span><span style="color:#ffffff">  20   0 </span><span style="color:#ffffff"> </span><span style="color:#06989a">288M</span><span style="color:#ffffff"> </span><span style="color:#06989a">18</span><span style="color:#ffffff">324</span><span style="color:#ffffff"> </span><span style="color:#06989a">15</span><span style="color:#ffffff">416</span><span style="color:#ffffff"> </span><span style="color:#ffffff">S</span><span style="color:#ffffff">  0.0  0.5  0:00.47 </span><span style="color:#4e9a06">/usr/libexec/packagekitd</span></div>
<div class="tl" style="top:1217px"><span style="color:#ffffff">   5825 </span><span style="color:#555753;font-weight:bold">daemon   </span><span style="color:#ffffff">  20   0 </span><span style="color:#ffffff"> </span><span style="color:#06989a">3</span><span style="color:#ffffff">864</span><span style="color:#ffffff"> </span><span style="color:#ffffff"> </span><span style="color:#06989a">1</span><span style="color:#ffffff">280</span><span style="color:#ffffff"> </span><span style="color:#ffffff"> </span><span style="color:#06989a">1</span><span style="color:#ffffff">140</span><span style="color:#ffffff"> </span><span style="color:#ffffff">S</span><span style="color:#ffffff">  0.0  0.0  0:00.01 </span><span style="color:#ffffff">/usr/sbin/atd -f</span></div>
<div class="tl" style="top:1246px"><span style="color:#ffffff">  14878 </span><span style="color:#ffffff">root     </span><span style="color:#ffffff">  20   0 </span><span style="color:#4e9a06">1</span><span style="color:#06989a">382M</span><span style="color:#ffffff"> </span><span style="color:#06989a">71</span><span style="color:#ffffff">892</span><span style="color:#ffffff"> </span><span style="color:#06989a">14</span><span style="color:#ffffff">396</span><span style="color:#ffffff"> </span><span style="color:#ffffff">S</span><span style="color:#ffffff">  0.0  1.8  8:41.05 </span><span style="color:#ffffff">/www/server/panel/pyenv/bin/python3 /www/server/panel/BT-Task</span></div>
<div class="tl" style="top:1275px"><span style="color:#ffffff">  14989 </span><span style="color:#ffffff">root     </span><span style="color:#ffffff">  20   0 </span><span style="color:#4e9a06">1</span><span style="color:#06989a">382M</span><span style="color:#ffffff"> </span><span style="color:#06989a">71</span><span style="color:#ffffff">892</span><span style="color:#ffffff"> </span><span style="color:#06989a">14</span><span style="color:#ffffff">396</span><span style="color:#ffffff"> </span><span style="color:#ffffff">S</span><span style="color:#ffffff">  0.0  1.8  3:00.77 </span><span style="color:#4e9a06">/www/server/panel/pyenv/bin/python3 /www/server/panel/BT-Task</span></div>
<div class="tl" style="top:1304px"><span style="color:#ffffff">  14990 </span><span style="color:#ffffff">root     </span><span style="color:#ffffff">  20   0 </span><span style="color:#4e9a06">1</span><span style="color:#06989a">382M</span><span style="color:#ffffff"> </span><span style="color:#06989a">71</span><span style="color:#ffffff">892</span><span style="color:#ffffff"> </span><span style="color:#06989a">14</span><span style="color:#ffffff">396</span><span style="color:#ffffff"> </span><span style="color:#ffffff">S</span><span style="color:#ffffff">  0.0  1.8  0:06.28 </span><span style="color:#4e9a06">/www/server/panel/pyenv/bin/python3 /www/server/panel/BT-Task</span></div>
<div class="tl" style="top:1333px"><span style="color:#ffffff">  14991 </span><span style="color:#ffffff">root     </span><span style="color:#ffffff">  20   0 </span><span style="color:#4e9a06">1</span><span style="color:#06989a">382M</span><span style="color:#ffffff"> </span><span style="color:#06989a">71</span><span style="color:#ffffff">892</span><span style="color:#ffffff"> </span><span style="color:#06989a">14</span><span style="color:#ffffff">396</span><span style="color:#ffffff"> </span><span style="color:#ffffff">S</span><span style="color:#ffffff">  0.0  1.8  0:02.57 </span><span style="color:#4e9a06">/www/server/panel/pyenv/bin/python3 /www/server/panel/BT-Task</span></div>
<div class="tl" style="top:1362px"><span style="color:#ffffff">  14992 </span><span style="color:#ffffff">root     </span><span style="color:#ffffff">  20   0 </span><span style="color:#4e9a06">1</span><span style="color:#06989a">382M</span><span style="color:#ffffff"> </span><span style="color:#06989a">71</span><span style="color:#ffffff">892</span><span style="color:#ffffff"> </span><span style="color:#06989a">14</span><span style="color:#ffffff">396</span><span style="color:#ffffff"> </span><span style="color:#ffffff">S</span><span style="color:#ffffff">  0.0  1.8  0:24.81 </span><span style="color:#4e9a06">/www/server/panel/pyenv/bin/python3 /www/server/panel/BT-Task</span></div>
<div class="tl" style="top:1391px"><span style="color:#ffffff">  14993 </span><span style="color:#ffffff">root     </span><span style="color:#ffffff">  20   0 </span><span style="color:#4e9a06">1</span><span style="color:#06989a">382M</span><span style="color:#ffffff"> </span><span style="color:#06989a">71</span><span style="color:#ffffff">892</span><span style="color:#ffffff"> </span><span style="color:#06989a">14</span><span style="color:#ffffff">396</span><span style="color:#ffffff"> </span><span style="color:#ffffff">S</span><span style="color:#ffffff">  0.0  1.8  1:06.97 </span><span style="color:#4e9a06">/www/server/panel/pyenv/bin/python3 /www/server/panel/BT-Task</span></div>
<div class="tl" style="top:1420px"><span style="color:#ffffff">  14994 </span><span style="color:#ffffff">root     </span><span style="color:#ffffff">  20   0 </span><span style="color:#4e9a06">1</span><span style="color:#06989a">382M</span><span style="color:#ffffff"> </span><span style="color:#06989a">71</span><span style="color:#ffffff">892</span><span style="color:#ffffff"> </span><span style="color:#06989a">14</span><span style="color:#ffffff">396</span><span style="color:#ffffff"> </span><span style="color:#ffffff">S</span><span style="color:#ffffff">  0.0  1.8  0:00.00 </span><span style="color:#4e9a06">/www/server/panel/pyenv/bin/python3 /www/server/panel/BT-Task</span></div>
<div class="tl" style="top:1449px"><span style="color:#ffffff">F1</span><span style="color:#2e3436">Help  </span><span style="color:#ffffff">F2</span><span style="color:#2e3436">Setup </span><span style="color:#ffffff">F3</span><span style="color:#2e3436">Search</span><span style="color:#ffffff">F4</span><span style="color:#2e3436">Filter</span><span style="color:#ffffff">F5</span><span style="color:#2e3436">Tree  </span><span style="color:#ffffff">F6</span><span style="color:#2e3436">SortBy</span><span style="color:#ffffff">F7</span><span style="color:#2e3436">Nice -</span><span style="color:#ffffff">F8</span><span style="color:#2e3436">Nice +</span><span style="color:#ffffff">F9</span><span style="color:#2e3436">Kill  </span><span style="color:#ffffff">F10</span><span style="color:#2e3436">Quit</span></div>

<!-- monitor panel -->
<div class="a" style="left:2162px;top:62px;width:1px;height:1462px;background:#ededed"></div>
<div class="a" style="left:2463px;top:62px;width:39px;height:1462px;background:#f5f5f5"></div>
<div class="vt" style="left:2473px;top:75px;color:#1a73e8;font-size:20.9px">Monitor</div>
<div class="vt" style="left:2473px;top:166px;color:#222;font-size:20.2px">Video audit</div>
<div class="vt" style="left:2473px;top:291px;color:#222;font-size:19.4px">File management</div>

<div class="a" style="left:2178px;top:71px;font-size:23px;line-height:26px;font-weight:bold;color:#4a4a4a">Monitor</div>

<div class="card" style="top:111px;height:214px"></div>
<svg class="a" style="left:2192px;top:132px" width="15" height="17" viewBox="0 0 15 17"><path d="M7.5 16.2C3.5 12.3 1 9.6 1 6.6A6.5 6.5 0 0 1 14 6.6C14 9.6 11.5 12.3 7.5 16.2z" fill="none" stroke="#333" stroke-width="1.3"/><text x="3.6" y="9.2" font-size="6.5" font-family="Liberation Sans" font-weight="bold" fill="#333">IP</text></svg>
<div class="mt" style="left:2210px;top:129px;letter-spacing:-0.3px">192.168.10.72</div>
<svg class="a" style="left:2337px;top:132px" width="16" height="16" viewBox="0 0 16 16"><rect x="4.5" y="1" width="10.5" height="10.5" rx="1.5" fill="none" stroke="#1a73e8" stroke-width="1.4"/><path d="M2.5 4.5H1v10.5h10.5v-1.5" fill="none" stroke="#1a73e8" stroke-width="1.4"/></svg>
<div class="mt" style="left:2190px;top:168px;letter-spacing:-0.2px">Ubuntu 22.04.1 LTS</div>
<div class="mt" style="left:2190px;top:207px">Run:&nbsp; 4 Day</div>
<div class="mt" style="left:2190px;top:246px;letter-spacing:0.15px">Load:&nbsp; 0.56 / 0.17 / 0.10</div>
<div class="mt" style="left:2190px;top:285px;letter-spacing:0px">Processes:&nbsp; 199 &nbsp; Active:&nbsp; 2</div>

<div class="card" style="top:342px;height:189px"></div>
<div class="mt" style="left:2189px;top:361px;font-size:21px;letter-spacing:-0.4px"><b>CPU</b></div><div class="mt" style="left:2247px;top:361px;font-size:21px">4 core</div>
<div class="a" style="left:2189px;top:406px;width:249px;height:1px;background:#e8e8e8"></div>
<div class="a" style="left:2189px;top:430px;width:166px;height:8px;border-radius:4px;background:#ebeef5"></div>
<div class="a" style="left:2189px;top:430px;width:2px;height:8px;border-radius:4px 0 0 4px;background:#1a73e8"></div>
<div class="mt" style="left:2363px;top:426px;font-size:15px;line-height:18px;color:#555">0.73%</div>
<div class="mt" style="left:2189px;top:453px;letter-spacing:-0.1px">Intel(R) Xeon(R) Platinum</div>
<div class="mt" style="left:2189px;top:491px;letter-spacing:-0.2px">6164 CPU @ 1.90GHz</div>

<div class="card" style="top:548px;height:151px"></div>
<div class="mt" style="left:2189px;top:567px;font-size:21px;letter-spacing:-0.4px"><b>RAM</b></div><div class="mt" style="left:2256px;top:567px;font-size:21px;letter-spacing:0.2px">534/3923(MB)</div>
<div class="a" style="left:2189px;top:612px;width:249px;height:1px;background:#e8e8e8"></div>
<div class="a" style="left:2189px;top:636px;width:166px;height:8px;border-radius:4px;background:#ebeef5"></div>
<div class="a" style="left:2189px;top:636px;width:22px;height:8px;border-radius:4px;background:#1a73e8"></div>
<div class="mt" style="left:2363px;top:632px;font-size:15px;line-height:18px;color:#555">13.61%</div>
<div class="mt" style="left:2189px;top:658px;letter-spacing:-0.2px">SWAP:&nbsp; 2 / 3925(MB)</div>

<div class="card" style="top:716px;height:227px"></div>
<div class="mt" style="left:2189px;top:734px;font-size:22px;font-weight:bold">Network IO</div>
<div class="a" style="left:2189px;top:779px;width:249px;height:1px;background:#e8e8e8"></div>
<div class="mt" style="left:2218px;top:809px">Speed</div>
<div class="mt" style="left:2311px;top:809px">Use traffic</div>
<svg class="a" style="left:2196px;top:855px" width="9" height="14" viewBox="0 0 9 14"><path d="M4.5 1V14M1 4.5L4.5 1L8 4.5" fill="none" stroke="#e6a23c" stroke-width="1.2"/></svg>
<div class="mt" style="left:2218px;top:853px">5.65 KB</div>
<div class="mt" style="left:2311px;top:853px">53.45 MB</div>
<svg class="a" style="left:2196px;top:899px" width="9" height="14" viewBox="0 0 9 14"><path d="M4.5 0V13M1 9.5L4.5 13L8 9.5" fill="none" stroke="#409eff" stroke-width="1.2"/></svg>
<div class="mt" style="left:2218px;top:898px">4.81 KB</div>
<div class="mt" style="left:2311px;top:898px">2.44 GB</div>

<div class="card" style="top:961px;height:206px"></div>
<div class="mt" style="left:2189px;top:979px;font-size:22px;font-weight:bold">Disk IO</div>
<div class="a" style="left:2189px;top:1024px;width:249px;height:1px;background:#e8e8e8"></div>
<div class="mt" style="left:2189px;top:1047px">Read:&nbsp; 0 B</div>
<div class="mt" style="left:2189px;top:1086px">Write:&nbsp; 298.67</div>
<div class="mt" style="left:2189px;top:1125px">KB</div>
<div class="a" style="left:2327px;top:1044px;width:1px;height:74px;background:#e0e0e0"></div>
<div class="mt" style="left:2337px;top:1047px">Delay</div>
<div class="mt" style="left:2397px;top:1047px">IOPS</div>
<div class="mt" style="left:2337px;top:1086px">26ms</div>
<div class="mt" style="left:2397px;top:1086px">71</div>

</body></html>
